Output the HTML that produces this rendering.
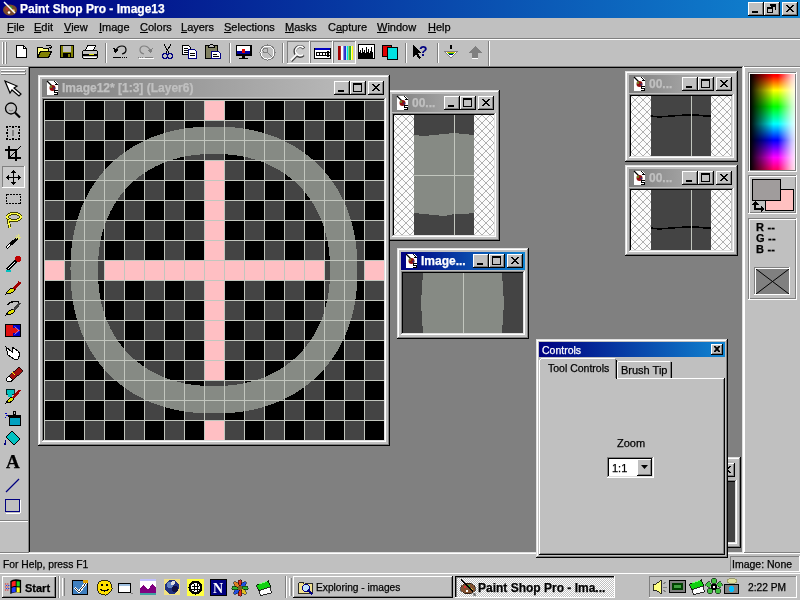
<!DOCTYPE html><html><head><meta charset="utf-8"><style>html,body{margin:0;padding:0;width:800px;height:600px;overflow:hidden;background:#c0c0c0}body>div,body>svg,div>div,div>svg{position:absolute}.t{font-family:"Liberation Sans",sans-serif;white-space:nowrap;line-height:12px;will-change:transform;-webkit-text-stroke:0.25px currentColor}u{text-decoration:underline}</style></head><body><div style="left:0px;top:0px;width:800px;height:600px;background:#c0c0c0;"></div><div style="left:0px;top:0px;width:800px;height:18px;background:linear-gradient(to right,#000080,#1084d0);"></div><svg style="left:2px;top:1px" width="16" height="16"><ellipse cx="8" cy="9" rx="7" ry="5.5" fill="#7a4a2a"/><circle cx="5" cy="8" r="1.5" fill="#c03030"/><circle cx="9" cy="6.5" r="1.3" fill="#30a030"/><circle cx="11.5" cy="9.5" r="1.3" fill="#e0c040"/><circle cx="7" cy="11.5" r="1.3" fill="#fff"/><path d="M2 1l11 11" stroke="#fff" stroke-width="1.5"/></svg><div class="t" style="left:20px;top:3px;font-size:12px;color:#fff;font-weight:bold;">Paint Shop Pro - Image13</div><div style="left:782px;top:2px;width:16px;height:14px;background:#c0c0c0;"></div><div style="left:782px;top:2px;width:16px;height:1px;background:#ffffff;"></div><div style="left:782px;top:2px;width:1px;height:14px;background:#ffffff;"></div><div style="left:782px;top:15px;width:16px;height:1px;background:#000000;"></div><div style="left:797px;top:2px;width:1px;height:14px;background:#000000;"></div><div style="left:783px;top:14px;width:14px;height:1px;background:#808080;"></div><div style="left:796px;top:3px;width:1px;height:12px;background:#808080;"></div><svg style="left:786px;top:5px" width="8" height="7"><path d="M0 0h2v1h-2zM6 0h2v1h-2zM1 1h2v1h-2zM5 1h2v1h-2zM2 2h4v1h-4zM3 3h2v1h-2zM2 4h4v1h-4zM1 5h2v1h-2zM5 5h2v1h-2zM0 6h2v1h-2zM6 6h2v1h-2z" fill="#000" shape-rendering="crispEdges"/></svg><div style="left:764px;top:2px;width:16px;height:14px;background:#c0c0c0;"></div><div style="left:764px;top:2px;width:16px;height:1px;background:#ffffff;"></div><div style="left:764px;top:2px;width:1px;height:14px;background:#ffffff;"></div><div style="left:764px;top:15px;width:16px;height:1px;background:#000000;"></div><div style="left:779px;top:2px;width:1px;height:14px;background:#000000;"></div><div style="left:765px;top:14px;width:14px;height:1px;background:#808080;"></div><div style="left:778px;top:3px;width:1px;height:12px;background:#808080;"></div><svg style="left:767px;top:4px" width="9" height="9"><path d="M3 0h6v6h-1v-4h-5z M0 3h6v6h-6z" fill="#000"/><rect x="1" y="5" width="4" height="3" fill="#c0c0c0"/><rect x="4" y="2" width="4" height="1" fill="#000"/></svg><div style="left:748px;top:2px;width:16px;height:14px;background:#c0c0c0;"></div><div style="left:748px;top:2px;width:16px;height:1px;background:#ffffff;"></div><div style="left:748px;top:2px;width:1px;height:14px;background:#ffffff;"></div><div style="left:748px;top:15px;width:16px;height:1px;background:#000000;"></div><div style="left:763px;top:2px;width:1px;height:14px;background:#000000;"></div><div style="left:749px;top:14px;width:14px;height:1px;background:#808080;"></div><div style="left:762px;top:3px;width:1px;height:12px;background:#808080;"></div><div style="left:752px;top:11px;width:6px;height:2px;background:#000"></div><div class="t" style="left:7px;top:21px;font-size:11px;color:#000;font-weight:normal;"><u>F</u>ile</div><div class="t" style="left:34px;top:21px;font-size:11px;color:#000;font-weight:normal;"><u>E</u>dit</div><div class="t" style="left:64px;top:21px;font-size:11px;color:#000;font-weight:normal;"><u>V</u>iew</div><div class="t" style="left:99px;top:21px;font-size:11px;color:#000;font-weight:normal;"><u>I</u>mage</div><div class="t" style="left:140px;top:21px;font-size:11px;color:#000;font-weight:normal;"><u>C</u>olors</div><div class="t" style="left:181px;top:21px;font-size:11px;color:#000;font-weight:normal;"><u>L</u>ayers</div><div class="t" style="left:224px;top:21px;font-size:11px;color:#000;font-weight:normal;"><u>S</u>elections</div><div class="t" style="left:285px;top:21px;font-size:11px;color:#000;font-weight:normal;"><u>M</u>asks</div><div class="t" style="left:328px;top:21px;font-size:11px;color:#000;font-weight:normal;">C<u>a</u>pture</div><div class="t" style="left:377px;top:21px;font-size:11px;color:#000;font-weight:normal;"><u>W</u>indow</div><div class="t" style="left:428px;top:21px;font-size:11px;color:#000;font-weight:normal;"><u>H</u>elp</div><div style="left:0px;top:38px;width:800px;height:1px;background:#808080;"></div><div style="left:0px;top:39px;width:800px;height:1px;background:#ffffff;"></div><div style="left:0px;top:66px;width:800px;height:1px;background:#808080;"></div><div style="left:28px;top:66px;width:716px;height:487px;background:#808080;"></div><div style="left:29px;top:67px;width:713px;height:485px;background:#000000;"></div><div style="left:30px;top:68px;width:712px;height:484px;background:#808080;"></div><div style="left:743px;top:66px;width:1px;height:488px;background:#ffffff;"></div><div style="left:742px;top:67px;width:1px;height:485px;background:#dfdfdf;"></div><div style="left:0px;top:553px;width:800px;height:1px;background:#ffffff;"></div><div style="left:29px;top:552px;width:714px;height:1px;background:#dfdfdf;"></div><div style="left:0px;top:552px;width:28px;height:1px;background:#808080;"></div><div style="left:388px;top:90px;width:112px;height:151px;background:#c0c0c0;"></div><div style="left:388px;top:90px;width:112px;height:1px;background:#dfdfdf;"></div><div style="left:388px;top:90px;width:1px;height:151px;background:#dfdfdf;"></div><div style="left:388px;top:240px;width:112px;height:1px;background:#000000;"></div><div style="left:499px;top:90px;width:1px;height:151px;background:#000000;"></div><div style="left:389px;top:91px;width:110px;height:1px;background:#ffffff;"></div><div style="left:389px;top:91px;width:1px;height:149px;background:#ffffff;"></div><div style="left:389px;top:239px;width:110px;height:1px;background:#808080;"></div><div style="left:498px;top:91px;width:1px;height:149px;background:#808080;"></div><div style="left:392px;top:94px;width:104px;height:18px;background:linear-gradient(to right,#808080,#c0c0c0);"></div><svg style="left:395px;top:95px" width="16" height="16" shape-rendering="crispEdges"><path d="M2 1h8l3 3v11h-11z" fill="#fff"/><path d="M9.5 1.5l3 3h-3" fill="none" stroke="#000"/><path d="M2 1l5 5" stroke="#000" stroke-width="1.2" shape-rendering="auto"/><circle cx="7.5" cy="8" r="3" fill="#901010" shape-rendering="auto"/><circle cx="6" cy="6.8" r="1.2" fill="#708020" shape-rendering="auto"/><circle cx="9.3" cy="8.5" r="0.9" fill="#203080" shape-rendering="auto"/><path d="M9 10h4v1h-3v1h3v3h-4v-1h3v-1h-3z" fill="#000"/></svg><div class="t" style="left:412px;top:97px;font-size:12px;color:#c0c0c0;font-weight:bold;">00...</div><div style="left:478px;top:96px;width:16px;height:14px;background:#c0c0c0;"></div><div style="left:478px;top:96px;width:16px;height:1px;background:#ffffff;"></div><div style="left:478px;top:96px;width:1px;height:14px;background:#ffffff;"></div><div style="left:478px;top:109px;width:16px;height:1px;background:#000000;"></div><div style="left:493px;top:96px;width:1px;height:14px;background:#000000;"></div><div style="left:479px;top:108px;width:14px;height:1px;background:#808080;"></div><div style="left:492px;top:97px;width:1px;height:12px;background:#808080;"></div><svg style="left:482px;top:99px" width="8" height="7"><path d="M0 0h2v1h-2zM6 0h2v1h-2zM1 1h2v1h-2zM5 1h2v1h-2zM2 2h4v1h-4zM3 3h2v1h-2zM2 4h4v1h-4zM1 5h2v1h-2zM5 5h2v1h-2zM0 6h2v1h-2zM6 6h2v1h-2z" fill="#000" shape-rendering="crispEdges"/></svg><div style="left:460px;top:96px;width:16px;height:14px;background:#c0c0c0;"></div><div style="left:460px;top:96px;width:16px;height:1px;background:#ffffff;"></div><div style="left:460px;top:96px;width:1px;height:14px;background:#ffffff;"></div><div style="left:460px;top:109px;width:16px;height:1px;background:#000000;"></div><div style="left:475px;top:96px;width:1px;height:14px;background:#000000;"></div><div style="left:461px;top:108px;width:14px;height:1px;background:#808080;"></div><div style="left:474px;top:97px;width:1px;height:12px;background:#808080;"></div><svg style="left:463px;top:98px" width="9" height="9"><path d="M0 0h9v9h-9z M1 2v6h7v-6z" fill="#000" fill-rule="evenodd"/></svg><div style="left:444px;top:96px;width:16px;height:14px;background:#c0c0c0;"></div><div style="left:444px;top:96px;width:16px;height:1px;background:#ffffff;"></div><div style="left:444px;top:96px;width:1px;height:14px;background:#ffffff;"></div><div style="left:444px;top:109px;width:16px;height:1px;background:#000000;"></div><div style="left:459px;top:96px;width:1px;height:14px;background:#000000;"></div><div style="left:445px;top:108px;width:14px;height:1px;background:#808080;"></div><div style="left:458px;top:97px;width:1px;height:12px;background:#808080;"></div><div style="left:448px;top:105px;width:6px;height:2px;background:#000"></div><div style="left:392px;top:113px;width:104px;height:1px;background:#808080;"></div><div style="left:392px;top:113px;width:1px;height:124px;background:#808080;"></div><div style="left:392px;top:236px;width:104px;height:1px;background:#ffffff;"></div><div style="left:495px;top:113px;width:1px;height:124px;background:#ffffff;"></div><div style="left:393px;top:114px;width:102px;height:1px;background:#000000;"></div><div style="left:393px;top:114px;width:1px;height:122px;background:#000000;"></div><div style="left:393px;top:235px;width:102px;height:1px;background:#dfdfdf;"></div><div style="left:494px;top:114px;width:1px;height:122px;background:#dfdfdf;"></div><div style="left:394px;top:115px;width:100px;height:120px;overflow:hidden"><div style="left:0px;top:0px;width:20px;height:120px"><svg width="100%" height="100%" style="position:static;display:block"><defs><pattern id="ck1" width="8" height="8" patternUnits="userSpaceOnUse"><rect width="8" height="8" fill="#fcfcfc"/><path d="M0 0L8 8M8 0L0 8" stroke="#b0b0b0" stroke-width="1"/></pattern></defs><rect width="100%" height="100%" fill="url(#ck1)"/></svg></div><div style="left:80px;top:0px;width:20px;height:120px"><svg width="100%" height="100%" style="position:static;display:block"><defs><pattern id="ck2" width="8" height="8" patternUnits="userSpaceOnUse"><rect width="8" height="8" fill="#fcfcfc"/><path d="M0 0L8 8M8 0L0 8" stroke="#b0b0b0" stroke-width="1"/></pattern></defs><rect width="100%" height="100%" fill="url(#ck2)"/></svg></div><svg style="left:20px;top:0" width="60" height="120" shape-rendering="crispEdges"><rect width="60" height="120" fill="#444444"/><path d="M0 20 L10 21 L20 20 L30 19 L40 18 L50 19 L60 20 L60 98 L50 99 L40 99 L30 101 L20 100 L10 99 L0 98 Z" fill="#868a84"/><rect x="40" y="0" width="1" height="120" fill="#c2c6be"/><rect x="0" y="60" width="60" height="1" fill="#c2c6be"/></svg></div><div style="left:38px;top:75px;width:352px;height:371px;background:#c0c0c0;"></div><div style="left:38px;top:75px;width:352px;height:1px;background:#dfdfdf;"></div><div style="left:38px;top:75px;width:1px;height:371px;background:#dfdfdf;"></div><div style="left:38px;top:445px;width:352px;height:1px;background:#000000;"></div><div style="left:389px;top:75px;width:1px;height:371px;background:#000000;"></div><div style="left:39px;top:76px;width:350px;height:1px;background:#ffffff;"></div><div style="left:39px;top:76px;width:1px;height:369px;background:#ffffff;"></div><div style="left:39px;top:444px;width:350px;height:1px;background:#808080;"></div><div style="left:388px;top:76px;width:1px;height:369px;background:#808080;"></div><div style="left:42px;top:79px;width:344px;height:18px;background:linear-gradient(to right,#808080,#c0c0c0);"></div><svg style="left:45px;top:80px" width="16" height="16" shape-rendering="crispEdges"><path d="M2 1h8l3 3v11h-11z" fill="#fff"/><path d="M9.5 1.5l3 3h-3" fill="none" stroke="#000"/><path d="M2 1l5 5" stroke="#000" stroke-width="1.2" shape-rendering="auto"/><circle cx="7.5" cy="8" r="3" fill="#901010" shape-rendering="auto"/><circle cx="6" cy="6.8" r="1.2" fill="#708020" shape-rendering="auto"/><circle cx="9.3" cy="8.5" r="0.9" fill="#203080" shape-rendering="auto"/><path d="M9 10h4v1h-3v1h3v3h-4v-1h3v-1h-3z" fill="#000"/></svg><div class="t" style="left:62px;top:82px;font-size:12px;color:#c0c0c0;font-weight:bold;">Image12* [1:3] (Layer6)</div><div style="left:368px;top:81px;width:16px;height:14px;background:#c0c0c0;"></div><div style="left:368px;top:81px;width:16px;height:1px;background:#ffffff;"></div><div style="left:368px;top:81px;width:1px;height:14px;background:#ffffff;"></div><div style="left:368px;top:94px;width:16px;height:1px;background:#000000;"></div><div style="left:383px;top:81px;width:1px;height:14px;background:#000000;"></div><div style="left:369px;top:93px;width:14px;height:1px;background:#808080;"></div><div style="left:382px;top:82px;width:1px;height:12px;background:#808080;"></div><svg style="left:372px;top:84px" width="8" height="7"><path d="M0 0h2v1h-2zM6 0h2v1h-2zM1 1h2v1h-2zM5 1h2v1h-2zM2 2h4v1h-4zM3 3h2v1h-2zM2 4h4v1h-4zM1 5h2v1h-2zM5 5h2v1h-2zM0 6h2v1h-2zM6 6h2v1h-2z" fill="#000" shape-rendering="crispEdges"/></svg><div style="left:350px;top:81px;width:16px;height:14px;background:#c0c0c0;"></div><div style="left:350px;top:81px;width:16px;height:1px;background:#ffffff;"></div><div style="left:350px;top:81px;width:1px;height:14px;background:#ffffff;"></div><div style="left:350px;top:94px;width:16px;height:1px;background:#000000;"></div><div style="left:365px;top:81px;width:1px;height:14px;background:#000000;"></div><div style="left:351px;top:93px;width:14px;height:1px;background:#808080;"></div><div style="left:364px;top:82px;width:1px;height:12px;background:#808080;"></div><svg style="left:353px;top:83px" width="9" height="9"><path d="M0 0h9v9h-9z M1 2v6h7v-6z" fill="#000" fill-rule="evenodd"/></svg><div style="left:334px;top:81px;width:16px;height:14px;background:#c0c0c0;"></div><div style="left:334px;top:81px;width:16px;height:1px;background:#ffffff;"></div><div style="left:334px;top:81px;width:1px;height:14px;background:#ffffff;"></div><div style="left:334px;top:94px;width:16px;height:1px;background:#000000;"></div><div style="left:349px;top:81px;width:1px;height:14px;background:#000000;"></div><div style="left:335px;top:93px;width:14px;height:1px;background:#808080;"></div><div style="left:348px;top:82px;width:1px;height:12px;background:#808080;"></div><div style="left:338px;top:90px;width:6px;height:2px;background:#000"></div><div style="left:42px;top:98px;width:344px;height:1px;background:#808080;"></div><div style="left:42px;top:98px;width:1px;height:344px;background:#808080;"></div><div style="left:42px;top:441px;width:344px;height:1px;background:#ffffff;"></div><div style="left:385px;top:98px;width:1px;height:344px;background:#ffffff;"></div><div style="left:43px;top:99px;width:342px;height:1px;background:#000000;"></div><div style="left:43px;top:99px;width:1px;height:342px;background:#000000;"></div><div style="left:43px;top:440px;width:342px;height:1px;background:#dfdfdf;"></div><div style="left:384px;top:99px;width:1px;height:342px;background:#dfdfdf;"></div><div style="left:44px;top:100px;width:340px;height:340px;overflow:hidden"><svg width="340" height="340" style="position:static;display:block" shape-rendering="crispEdges"><rect width="340" height="340" fill="#000"/><rect x="20" y="0" width="20" height="20" fill="#444444"/><rect x="60" y="0" width="20" height="20" fill="#444444"/><rect x="100" y="0" width="20" height="20" fill="#444444"/><rect x="140" y="0" width="20" height="20" fill="#444444"/><rect x="160" y="0" width="20" height="20" fill="#ffbfc3"/><rect x="200" y="0" width="20" height="20" fill="#444444"/><rect x="240" y="0" width="20" height="20" fill="#444444"/><rect x="280" y="0" width="20" height="20" fill="#444444"/><rect x="320" y="0" width="20" height="20" fill="#444444"/><rect x="0" y="20" width="20" height="20" fill="#444444"/><rect x="40" y="20" width="20" height="20" fill="#444444"/><rect x="80" y="20" width="20" height="20" fill="#444444"/><rect x="120" y="20" width="20" height="20" fill="#444444"/><rect x="160" y="20" width="20" height="20" fill="#444444"/><rect x="180" y="20" width="20" height="20" fill="#444444"/><rect x="220" y="20" width="20" height="20" fill="#444444"/><rect x="260" y="20" width="20" height="20" fill="#444444"/><rect x="300" y="20" width="20" height="20" fill="#444444"/><rect x="20" y="40" width="20" height="20" fill="#444444"/><rect x="60" y="40" width="20" height="20" fill="#444444"/><rect x="100" y="40" width="20" height="20" fill="#444444"/><rect x="140" y="40" width="20" height="20" fill="#444444"/><rect x="160" y="40" width="20" height="20" fill="#444444"/><rect x="200" y="40" width="20" height="20" fill="#444444"/><rect x="240" y="40" width="20" height="20" fill="#444444"/><rect x="280" y="40" width="20" height="20" fill="#444444"/><rect x="320" y="40" width="20" height="20" fill="#444444"/><rect x="0" y="60" width="20" height="20" fill="#444444"/><rect x="40" y="60" width="20" height="20" fill="#444444"/><rect x="80" y="60" width="20" height="20" fill="#444444"/><rect x="120" y="60" width="20" height="20" fill="#444444"/><rect x="160" y="60" width="20" height="20" fill="#ffbfc3"/><rect x="180" y="60" width="20" height="20" fill="#444444"/><rect x="220" y="60" width="20" height="20" fill="#444444"/><rect x="260" y="60" width="20" height="20" fill="#444444"/><rect x="300" y="60" width="20" height="20" fill="#444444"/><rect x="20" y="80" width="20" height="20" fill="#444444"/><rect x="60" y="80" width="20" height="20" fill="#444444"/><rect x="100" y="80" width="20" height="20" fill="#444444"/><rect x="140" y="80" width="20" height="20" fill="#444444"/><rect x="160" y="80" width="20" height="20" fill="#ffbfc3"/><rect x="200" y="80" width="20" height="20" fill="#444444"/><rect x="240" y="80" width="20" height="20" fill="#444444"/><rect x="280" y="80" width="20" height="20" fill="#444444"/><rect x="320" y="80" width="20" height="20" fill="#444444"/><rect x="0" y="100" width="20" height="20" fill="#444444"/><rect x="40" y="100" width="20" height="20" fill="#444444"/><rect x="80" y="100" width="20" height="20" fill="#444444"/><rect x="120" y="100" width="20" height="20" fill="#444444"/><rect x="160" y="100" width="20" height="20" fill="#ffbfc3"/><rect x="180" y="100" width="20" height="20" fill="#444444"/><rect x="220" y="100" width="20" height="20" fill="#444444"/><rect x="260" y="100" width="20" height="20" fill="#444444"/><rect x="300" y="100" width="20" height="20" fill="#444444"/><rect x="20" y="120" width="20" height="20" fill="#444444"/><rect x="60" y="120" width="20" height="20" fill="#444444"/><rect x="100" y="120" width="20" height="20" fill="#444444"/><rect x="140" y="120" width="20" height="20" fill="#444444"/><rect x="160" y="120" width="20" height="20" fill="#ffbfc3"/><rect x="200" y="120" width="20" height="20" fill="#444444"/><rect x="240" y="120" width="20" height="20" fill="#444444"/><rect x="280" y="120" width="20" height="20" fill="#444444"/><rect x="320" y="120" width="20" height="20" fill="#444444"/><rect x="0" y="140" width="20" height="20" fill="#444444"/><rect x="40" y="140" width="20" height="20" fill="#444444"/><rect x="80" y="140" width="20" height="20" fill="#444444"/><rect x="120" y="140" width="20" height="20" fill="#444444"/><rect x="160" y="140" width="20" height="20" fill="#ffbfc3"/><rect x="180" y="140" width="20" height="20" fill="#444444"/><rect x="220" y="140" width="20" height="20" fill="#444444"/><rect x="260" y="140" width="20" height="20" fill="#444444"/><rect x="300" y="140" width="20" height="20" fill="#444444"/><rect x="0" y="160" width="20" height="20" fill="#ffbfc3"/><rect x="20" y="160" width="20" height="20" fill="#444444"/><rect x="40" y="160" width="20" height="20" fill="#444444"/><rect x="60" y="160" width="20" height="20" fill="#ffbfc3"/><rect x="80" y="160" width="20" height="20" fill="#ffbfc3"/><rect x="100" y="160" width="20" height="20" fill="#ffbfc3"/><rect x="120" y="160" width="20" height="20" fill="#ffbfc3"/><rect x="140" y="160" width="20" height="20" fill="#ffbfc3"/><rect x="160" y="160" width="20" height="20" fill="#ffbfc3"/><rect x="180" y="160" width="20" height="20" fill="#ffbfc3"/><rect x="200" y="160" width="20" height="20" fill="#ffbfc3"/><rect x="220" y="160" width="20" height="20" fill="#ffbfc3"/><rect x="240" y="160" width="20" height="20" fill="#ffbfc3"/><rect x="260" y="160" width="20" height="20" fill="#ffbfc3"/><rect x="280" y="160" width="20" height="20" fill="#444444"/><rect x="300" y="160" width="20" height="20" fill="#444444"/><rect x="320" y="160" width="20" height="20" fill="#ffbfc3"/><rect x="20" y="180" width="20" height="20" fill="#444444"/><rect x="60" y="180" width="20" height="20" fill="#444444"/><rect x="100" y="180" width="20" height="20" fill="#444444"/><rect x="140" y="180" width="20" height="20" fill="#444444"/><rect x="160" y="180" width="20" height="20" fill="#ffbfc3"/><rect x="200" y="180" width="20" height="20" fill="#444444"/><rect x="240" y="180" width="20" height="20" fill="#444444"/><rect x="280" y="180" width="20" height="20" fill="#444444"/><rect x="320" y="180" width="20" height="20" fill="#444444"/><rect x="0" y="200" width="20" height="20" fill="#444444"/><rect x="40" y="200" width="20" height="20" fill="#444444"/><rect x="80" y="200" width="20" height="20" fill="#444444"/><rect x="120" y="200" width="20" height="20" fill="#444444"/><rect x="160" y="200" width="20" height="20" fill="#ffbfc3"/><rect x="180" y="200" width="20" height="20" fill="#444444"/><rect x="220" y="200" width="20" height="20" fill="#444444"/><rect x="260" y="200" width="20" height="20" fill="#444444"/><rect x="300" y="200" width="20" height="20" fill="#444444"/><rect x="20" y="220" width="20" height="20" fill="#444444"/><rect x="60" y="220" width="20" height="20" fill="#444444"/><rect x="100" y="220" width="20" height="20" fill="#444444"/><rect x="140" y="220" width="20" height="20" fill="#444444"/><rect x="160" y="220" width="20" height="20" fill="#ffbfc3"/><rect x="200" y="220" width="20" height="20" fill="#444444"/><rect x="240" y="220" width="20" height="20" fill="#444444"/><rect x="280" y="220" width="20" height="20" fill="#444444"/><rect x="320" y="220" width="20" height="20" fill="#444444"/><rect x="0" y="240" width="20" height="20" fill="#444444"/><rect x="40" y="240" width="20" height="20" fill="#444444"/><rect x="80" y="240" width="20" height="20" fill="#444444"/><rect x="120" y="240" width="20" height="20" fill="#444444"/><rect x="160" y="240" width="20" height="20" fill="#ffbfc3"/><rect x="180" y="240" width="20" height="20" fill="#444444"/><rect x="220" y="240" width="20" height="20" fill="#444444"/><rect x="260" y="240" width="20" height="20" fill="#444444"/><rect x="300" y="240" width="20" height="20" fill="#444444"/><rect x="20" y="260" width="20" height="20" fill="#444444"/><rect x="60" y="260" width="20" height="20" fill="#444444"/><rect x="100" y="260" width="20" height="20" fill="#444444"/><rect x="140" y="260" width="20" height="20" fill="#444444"/><rect x="160" y="260" width="20" height="20" fill="#ffbfc3"/><rect x="200" y="260" width="20" height="20" fill="#444444"/><rect x="240" y="260" width="20" height="20" fill="#444444"/><rect x="280" y="260" width="20" height="20" fill="#444444"/><rect x="320" y="260" width="20" height="20" fill="#444444"/><rect x="0" y="280" width="20" height="20" fill="#444444"/><rect x="40" y="280" width="20" height="20" fill="#444444"/><rect x="80" y="280" width="20" height="20" fill="#444444"/><rect x="120" y="280" width="20" height="20" fill="#444444"/><rect x="160" y="280" width="20" height="20" fill="#444444"/><rect x="180" y="280" width="20" height="20" fill="#444444"/><rect x="220" y="280" width="20" height="20" fill="#444444"/><rect x="260" y="280" width="20" height="20" fill="#444444"/><rect x="300" y="280" width="20" height="20" fill="#444444"/><rect x="20" y="300" width="20" height="20" fill="#444444"/><rect x="60" y="300" width="20" height="20" fill="#444444"/><rect x="100" y="300" width="20" height="20" fill="#444444"/><rect x="140" y="300" width="20" height="20" fill="#444444"/><rect x="160" y="300" width="20" height="20" fill="#444444"/><rect x="200" y="300" width="20" height="20" fill="#444444"/><rect x="240" y="300" width="20" height="20" fill="#444444"/><rect x="280" y="300" width="20" height="20" fill="#444444"/><rect x="320" y="300" width="20" height="20" fill="#444444"/><rect x="0" y="320" width="20" height="20" fill="#444444"/><rect x="40" y="320" width="20" height="20" fill="#444444"/><rect x="80" y="320" width="20" height="20" fill="#444444"/><rect x="120" y="320" width="20" height="20" fill="#444444"/><rect x="160" y="320" width="20" height="20" fill="#ffbfc3"/><rect x="180" y="320" width="20" height="20" fill="#444444"/><rect x="220" y="320" width="20" height="20" fill="#444444"/><rect x="260" y="320" width="20" height="20" fill="#444444"/><rect x="300" y="320" width="20" height="20" fill="#444444"/><path d="M313.50 170.00 L313.48 173.76 L313.40 177.52 L313.26 181.27 L313.04 185.03 L312.75 188.79 L312.38 192.55 L311.93 196.30 L311.39 200.05 L310.76 203.79 L310.04 207.52 L309.23 211.24 L308.32 214.94 L307.31 218.62 L306.20 222.28 L305.00 225.92 L303.69 229.52 L302.28 233.09 L300.76 236.63 L299.15 240.12 L297.43 243.57 L295.60 246.97 L293.68 250.32 L291.65 253.61 L289.52 256.84 L287.29 260.00 L284.97 263.10 L282.54 266.12 L280.02 269.07 L277.42 271.93 L274.72 274.72 L271.93 277.42 L269.07 280.02 L266.12 282.54 L263.10 284.97 L260.00 287.29 L256.84 289.52 L253.61 291.65 L250.32 293.68 L246.97 295.60 L243.57 297.43 L240.12 299.15 L236.63 300.76 L233.09 302.28 L229.52 303.69 L225.92 305.00 L222.28 306.20 L218.62 307.31 L214.94 308.32 L211.24 309.23 L207.52 310.04 L203.79 310.76 L200.05 311.39 L196.30 311.93 L192.55 312.38 L188.79 312.75 L185.03 313.04 L181.27 313.26 L177.52 313.40 L173.76 313.48 L170.00 313.50 L166.24 313.48 L162.48 313.40 L158.73 313.26 L154.97 313.04 L151.21 312.75 L147.45 312.38 L143.70 311.93 L139.95 311.39 L136.21 310.76 L132.48 310.04 L128.76 309.23 L125.06 308.32 L121.38 307.31 L117.72 306.20 L114.08 305.00 L110.48 303.69 L106.91 302.28 L103.37 300.76 L99.88 299.15 L96.43 297.43 L93.03 295.60 L89.68 293.68 L86.39 291.65 L83.16 289.52 L80.00 287.29 L76.90 284.97 L73.88 282.54 L70.93 280.02 L68.07 277.42 L65.28 274.72 L62.58 271.93 L59.98 269.07 L57.46 266.12 L55.03 263.10 L52.71 260.00 L50.48 256.84 L48.35 253.61 L46.32 250.32 L44.40 246.97 L42.57 243.57 L40.85 240.12 L39.24 236.63 L37.72 233.09 L36.31 229.52 L35.00 225.92 L33.80 222.28 L32.69 218.62 L31.68 214.94 L30.77 211.24 L29.96 207.52 L29.24 203.79 L28.61 200.05 L28.07 196.30 L27.62 192.55 L27.25 188.79 L26.96 185.03 L26.74 181.27 L26.60 177.52 L26.52 173.76 L26.50 170.00 L26.52 166.24 L26.60 162.48 L26.74 158.73 L26.96 154.97 L27.25 151.21 L27.62 147.45 L28.07 143.70 L28.61 139.95 L29.24 136.21 L29.96 132.48 L30.77 128.76 L31.68 125.06 L32.69 121.38 L33.80 117.72 L35.00 114.08 L36.31 110.48 L37.72 106.91 L39.24 103.37 L40.85 99.88 L42.57 96.43 L44.40 93.03 L46.32 89.68 L48.35 86.39 L50.48 83.16 L52.71 80.00 L55.03 76.90 L57.46 73.88 L59.98 70.93 L62.58 68.07 L65.28 65.28 L68.07 62.58 L70.93 59.98 L73.88 57.46 L76.90 55.03 L80.00 52.71 L83.16 50.48 L86.39 48.35 L89.68 46.32 L93.03 44.40 L96.43 42.57 L99.88 40.85 L103.37 39.24 L106.91 37.72 L110.48 36.31 L114.08 35.00 L117.72 33.80 L121.38 32.69 L125.06 31.68 L128.76 30.77 L132.48 29.96 L136.21 29.24 L139.95 28.61 L143.70 28.07 L147.45 27.62 L151.21 27.25 L154.97 26.96 L158.73 26.74 L162.48 26.60 L166.24 26.52 L170.00 26.50 L173.76 26.52 L177.52 26.60 L181.27 26.74 L185.03 26.96 L188.79 27.25 L192.55 27.62 L196.30 28.07 L200.05 28.61 L203.79 29.24 L207.52 29.96 L211.24 30.77 L214.94 31.68 L218.62 32.69 L222.28 33.80 L225.92 35.00 L229.52 36.31 L233.09 37.72 L236.63 39.24 L240.12 40.85 L243.57 42.57 L246.97 44.40 L250.32 46.32 L253.61 48.35 L256.84 50.48 L260.00 52.71 L263.10 55.03 L266.12 57.46 L269.07 59.98 L271.93 62.58 L274.72 65.28 L277.42 68.07 L280.02 70.93 L282.54 73.88 L284.97 76.90 L287.29 80.00 L289.52 83.16 L291.65 86.39 L293.68 89.68 L295.60 93.03 L297.43 96.43 L299.15 99.88 L300.76 103.37 L302.28 106.91 L303.69 110.48 L305.00 114.08 L306.20 117.72 L307.31 121.38 L308.32 125.06 L309.23 128.76 L310.04 132.48 L310.76 136.21 L311.39 139.95 L311.93 143.70 L312.38 147.45 L312.75 151.21 L313.04 154.97 L313.26 158.73 L313.40 162.48 L313.48 166.24Z M286.00 170.00 L285.98 173.04 L285.92 176.08 L285.80 179.11 L285.63 182.15 L285.40 185.19 L285.10 188.23 L284.73 191.26 L284.29 194.29 L283.78 197.32 L283.20 200.33 L282.54 203.34 L281.81 206.33 L281.00 209.31 L280.10 212.26 L279.13 215.20 L278.07 218.12 L276.93 221.00 L275.71 223.86 L274.40 226.68 L273.01 229.47 L271.53 232.22 L269.98 234.93 L268.34 237.59 L266.62 240.20 L264.81 242.75 L262.93 245.26 L260.97 247.70 L258.94 250.08 L256.83 252.40 L254.65 254.65 L252.40 256.83 L250.08 258.94 L247.70 260.97 L245.26 262.93 L242.75 264.81 L240.20 266.62 L237.59 268.34 L234.93 269.98 L232.22 271.53 L229.47 273.01 L226.68 274.40 L223.86 275.71 L221.00 276.93 L218.12 278.07 L215.20 279.13 L212.26 280.10 L209.31 281.00 L206.33 281.81 L203.34 282.54 L200.33 283.20 L197.32 283.78 L194.29 284.29 L191.26 284.73 L188.23 285.10 L185.19 285.40 L182.15 285.63 L179.11 285.80 L176.08 285.92 L173.04 285.98 L170.00 286.00 L166.96 285.98 L163.92 285.92 L160.89 285.80 L157.85 285.63 L154.81 285.40 L151.77 285.10 L148.74 284.73 L145.71 284.29 L142.68 283.78 L139.67 283.20 L136.66 282.54 L133.67 281.81 L130.69 281.00 L127.74 280.10 L124.80 279.13 L121.88 278.07 L119.00 276.93 L116.14 275.71 L113.32 274.40 L110.53 273.01 L107.78 271.53 L105.07 269.98 L102.41 268.34 L99.80 266.62 L97.25 264.81 L94.74 262.93 L92.30 260.97 L89.92 258.94 L87.60 256.83 L85.35 254.65 L83.17 252.40 L81.06 250.08 L79.03 247.70 L77.07 245.26 L75.19 242.75 L73.38 240.20 L71.66 237.59 L70.02 234.93 L68.47 232.22 L66.99 229.47 L65.60 226.68 L64.29 223.86 L63.07 221.00 L61.93 218.12 L60.87 215.20 L59.90 212.26 L59.00 209.31 L58.19 206.33 L57.46 203.34 L56.80 200.33 L56.22 197.32 L55.71 194.29 L55.27 191.26 L54.90 188.23 L54.60 185.19 L54.37 182.15 L54.20 179.11 L54.08 176.08 L54.02 173.04 L54.00 170.00 L54.02 166.96 L54.08 163.92 L54.20 160.89 L54.37 157.85 L54.60 154.81 L54.90 151.77 L55.27 148.74 L55.71 145.71 L56.22 142.68 L56.80 139.67 L57.46 136.66 L58.19 133.67 L59.00 130.69 L59.90 127.74 L60.87 124.80 L61.93 121.88 L63.07 119.00 L64.29 116.14 L65.60 113.32 L66.99 110.53 L68.47 107.78 L70.02 105.07 L71.66 102.41 L73.38 99.80 L75.19 97.25 L77.07 94.74 L79.03 92.30 L81.06 89.92 L83.17 87.60 L85.35 85.35 L87.60 83.17 L89.92 81.06 L92.30 79.03 L94.74 77.07 L97.25 75.19 L99.80 73.38 L102.41 71.66 L105.07 70.02 L107.78 68.47 L110.53 66.99 L113.32 65.60 L116.14 64.29 L119.00 63.07 L121.88 61.93 L124.80 60.87 L127.74 59.90 L130.69 59.00 L133.67 58.19 L136.66 57.46 L139.67 56.80 L142.68 56.22 L145.71 55.71 L148.74 55.27 L151.77 54.90 L154.81 54.60 L157.85 54.37 L160.89 54.20 L163.92 54.08 L166.96 54.02 L170.00 54.00 L173.04 54.02 L176.08 54.08 L179.11 54.20 L182.15 54.37 L185.19 54.60 L188.23 54.90 L191.26 55.27 L194.29 55.71 L197.32 56.22 L200.33 56.80 L203.34 57.46 L206.33 58.19 L209.31 59.00 L212.26 59.90 L215.20 60.87 L218.12 61.93 L221.00 63.07 L223.86 64.29 L226.68 65.60 L229.47 66.99 L232.22 68.47 L234.93 70.02 L237.59 71.66 L240.20 73.38 L242.75 75.19 L245.26 77.07 L247.70 79.03 L250.08 81.06 L252.40 83.17 L254.65 85.35 L256.83 87.60 L258.94 89.92 L260.97 92.30 L262.93 94.74 L264.81 97.25 L266.62 99.80 L268.34 102.41 L269.98 105.07 L271.53 107.78 L273.01 110.53 L274.40 113.32 L275.71 116.14 L276.93 119.00 L278.07 121.88 L279.13 124.80 L280.10 127.74 L281.00 130.69 L281.81 133.67 L282.54 136.66 L283.20 139.67 L283.78 142.68 L284.29 145.71 L284.73 148.74 L285.10 151.77 L285.40 154.81 L285.63 157.85 L285.80 160.89 L285.92 163.92 L285.98 166.96Z" fill="#868a84" fill-rule="evenodd"/><rect x="0" y="0" width="1" height="340" fill="#c2c6be"/><rect x="0" y="0" width="340" height="1" fill="#c2c6be"/><rect x="20" y="0" width="1" height="340" fill="#c2c6be"/><rect x="0" y="20" width="340" height="1" fill="#c2c6be"/><rect x="40" y="0" width="1" height="340" fill="#c2c6be"/><rect x="0" y="40" width="340" height="1" fill="#c2c6be"/><rect x="60" y="0" width="1" height="340" fill="#c2c6be"/><rect x="0" y="60" width="340" height="1" fill="#c2c6be"/><rect x="80" y="0" width="1" height="340" fill="#c2c6be"/><rect x="0" y="80" width="340" height="1" fill="#c2c6be"/><rect x="100" y="0" width="1" height="340" fill="#c2c6be"/><rect x="0" y="100" width="340" height="1" fill="#c2c6be"/><rect x="120" y="0" width="1" height="340" fill="#c2c6be"/><rect x="0" y="120" width="340" height="1" fill="#c2c6be"/><rect x="140" y="0" width="1" height="340" fill="#c2c6be"/><rect x="0" y="140" width="340" height="1" fill="#c2c6be"/><rect x="160" y="0" width="1" height="340" fill="#c2c6be"/><rect x="0" y="160" width="340" height="1" fill="#c2c6be"/><rect x="180" y="0" width="1" height="340" fill="#c2c6be"/><rect x="0" y="180" width="340" height="1" fill="#c2c6be"/><rect x="200" y="0" width="1" height="340" fill="#c2c6be"/><rect x="0" y="200" width="340" height="1" fill="#c2c6be"/><rect x="220" y="0" width="1" height="340" fill="#c2c6be"/><rect x="0" y="220" width="340" height="1" fill="#c2c6be"/><rect x="240" y="0" width="1" height="340" fill="#c2c6be"/><rect x="0" y="240" width="340" height="1" fill="#c2c6be"/><rect x="260" y="0" width="1" height="340" fill="#c2c6be"/><rect x="0" y="260" width="340" height="1" fill="#c2c6be"/><rect x="280" y="0" width="1" height="340" fill="#c2c6be"/><rect x="0" y="280" width="340" height="1" fill="#c2c6be"/><rect x="300" y="0" width="1" height="340" fill="#c2c6be"/><rect x="0" y="300" width="340" height="1" fill="#c2c6be"/><rect x="320" y="0" width="1" height="340" fill="#c2c6be"/><rect x="0" y="320" width="340" height="1" fill="#c2c6be"/></svg></div><div style="left:625px;top:71px;width:113px;height:91px;background:#c0c0c0;"></div><div style="left:625px;top:71px;width:113px;height:1px;background:#dfdfdf;"></div><div style="left:625px;top:71px;width:1px;height:91px;background:#dfdfdf;"></div><div style="left:625px;top:161px;width:113px;height:1px;background:#000000;"></div><div style="left:737px;top:71px;width:1px;height:91px;background:#000000;"></div><div style="left:626px;top:72px;width:111px;height:1px;background:#ffffff;"></div><div style="left:626px;top:72px;width:1px;height:89px;background:#ffffff;"></div><div style="left:626px;top:160px;width:111px;height:1px;background:#808080;"></div><div style="left:736px;top:72px;width:1px;height:89px;background:#808080;"></div><div style="left:629px;top:75px;width:105px;height:18px;background:linear-gradient(to right,#808080,#c0c0c0);"></div><svg style="left:632px;top:76px" width="16" height="16" shape-rendering="crispEdges"><path d="M2 1h8l3 3v11h-11z" fill="#fff"/><path d="M9.5 1.5l3 3h-3" fill="none" stroke="#000"/><path d="M2 1l5 5" stroke="#000" stroke-width="1.2" shape-rendering="auto"/><circle cx="7.5" cy="8" r="3" fill="#901010" shape-rendering="auto"/><circle cx="6" cy="6.8" r="1.2" fill="#708020" shape-rendering="auto"/><circle cx="9.3" cy="8.5" r="0.9" fill="#203080" shape-rendering="auto"/><path d="M9 10h4v1h-3v1h3v3h-4v-1h3v-1h-3z" fill="#000"/></svg><div class="t" style="left:649px;top:78px;font-size:12px;color:#c0c0c0;font-weight:bold;">00...</div><div style="left:716px;top:77px;width:16px;height:14px;background:#c0c0c0;"></div><div style="left:716px;top:77px;width:16px;height:1px;background:#ffffff;"></div><div style="left:716px;top:77px;width:1px;height:14px;background:#ffffff;"></div><div style="left:716px;top:90px;width:16px;height:1px;background:#000000;"></div><div style="left:731px;top:77px;width:1px;height:14px;background:#000000;"></div><div style="left:717px;top:89px;width:14px;height:1px;background:#808080;"></div><div style="left:730px;top:78px;width:1px;height:12px;background:#808080;"></div><svg style="left:720px;top:80px" width="8" height="7"><path d="M0 0h2v1h-2zM6 0h2v1h-2zM1 1h2v1h-2zM5 1h2v1h-2zM2 2h4v1h-4zM3 3h2v1h-2zM2 4h4v1h-4zM1 5h2v1h-2zM5 5h2v1h-2zM0 6h2v1h-2zM6 6h2v1h-2z" fill="#000" shape-rendering="crispEdges"/></svg><div style="left:698px;top:77px;width:16px;height:14px;background:#c0c0c0;"></div><div style="left:698px;top:77px;width:16px;height:1px;background:#ffffff;"></div><div style="left:698px;top:77px;width:1px;height:14px;background:#ffffff;"></div><div style="left:698px;top:90px;width:16px;height:1px;background:#000000;"></div><div style="left:713px;top:77px;width:1px;height:14px;background:#000000;"></div><div style="left:699px;top:89px;width:14px;height:1px;background:#808080;"></div><div style="left:712px;top:78px;width:1px;height:12px;background:#808080;"></div><svg style="left:701px;top:79px" width="9" height="9"><path d="M0 0h9v9h-9z M1 2v6h7v-6z" fill="#000" fill-rule="evenodd"/></svg><div style="left:682px;top:77px;width:16px;height:14px;background:#c0c0c0;"></div><div style="left:682px;top:77px;width:16px;height:1px;background:#ffffff;"></div><div style="left:682px;top:77px;width:1px;height:14px;background:#ffffff;"></div><div style="left:682px;top:90px;width:16px;height:1px;background:#000000;"></div><div style="left:697px;top:77px;width:1px;height:14px;background:#000000;"></div><div style="left:683px;top:89px;width:14px;height:1px;background:#808080;"></div><div style="left:696px;top:78px;width:1px;height:12px;background:#808080;"></div><div style="left:686px;top:86px;width:6px;height:2px;background:#000"></div><div style="left:629px;top:94px;width:105px;height:1px;background:#808080;"></div><div style="left:629px;top:94px;width:1px;height:64px;background:#808080;"></div><div style="left:629px;top:157px;width:105px;height:1px;background:#ffffff;"></div><div style="left:733px;top:94px;width:1px;height:64px;background:#ffffff;"></div><div style="left:630px;top:95px;width:103px;height:1px;background:#000000;"></div><div style="left:630px;top:95px;width:1px;height:62px;background:#000000;"></div><div style="left:630px;top:156px;width:103px;height:1px;background:#dfdfdf;"></div><div style="left:732px;top:95px;width:1px;height:62px;background:#dfdfdf;"></div><div style="left:631px;top:96px;width:101px;height:60px;overflow:hidden"><div style="left:0px;top:0px;width:20px;height:60px"><svg width="100%" height="100%" style="position:static;display:block"><defs><pattern id="ck3" width="8" height="8" patternUnits="userSpaceOnUse"><rect width="8" height="8" fill="#fcfcfc"/><path d="M0 0L8 8M8 0L0 8" stroke="#b0b0b0" stroke-width="1"/></pattern></defs><rect width="100%" height="100%" fill="url(#ck3)"/></svg></div><div style="left:80px;top:0px;width:20px;height:60px"><svg width="100%" height="100%" style="position:static;display:block"><defs><pattern id="ck4" width="8" height="8" patternUnits="userSpaceOnUse"><rect width="8" height="8" fill="#fcfcfc"/><path d="M0 0L8 8M8 0L0 8" stroke="#b0b0b0" stroke-width="1"/></pattern></defs><rect width="100%" height="100%" fill="url(#ck4)"/></svg></div><svg style="left:20px;top:0" width="60" height="60" shape-rendering="crispEdges"><rect width="60" height="60" fill="#444444"/><path d="M0 20 L8 21 L20 20 L35 19 L45 19 L55 20 L60 20" fill="none" stroke="#000" stroke-width="1.5"/><rect x="40" y="0" width="1" height="60" fill="#c2c6be"/></svg></div><div style="left:625px;top:165px;width:113px;height:91px;background:#c0c0c0;"></div><div style="left:625px;top:165px;width:113px;height:1px;background:#dfdfdf;"></div><div style="left:625px;top:165px;width:1px;height:91px;background:#dfdfdf;"></div><div style="left:625px;top:255px;width:113px;height:1px;background:#000000;"></div><div style="left:737px;top:165px;width:1px;height:91px;background:#000000;"></div><div style="left:626px;top:166px;width:111px;height:1px;background:#ffffff;"></div><div style="left:626px;top:166px;width:1px;height:89px;background:#ffffff;"></div><div style="left:626px;top:254px;width:111px;height:1px;background:#808080;"></div><div style="left:736px;top:166px;width:1px;height:89px;background:#808080;"></div><div style="left:629px;top:169px;width:105px;height:18px;background:linear-gradient(to right,#808080,#c0c0c0);"></div><svg style="left:632px;top:170px" width="16" height="16" shape-rendering="crispEdges"><path d="M2 1h8l3 3v11h-11z" fill="#fff"/><path d="M9.5 1.5l3 3h-3" fill="none" stroke="#000"/><path d="M2 1l5 5" stroke="#000" stroke-width="1.2" shape-rendering="auto"/><circle cx="7.5" cy="8" r="3" fill="#901010" shape-rendering="auto"/><circle cx="6" cy="6.8" r="1.2" fill="#708020" shape-rendering="auto"/><circle cx="9.3" cy="8.5" r="0.9" fill="#203080" shape-rendering="auto"/><path d="M9 10h4v1h-3v1h3v3h-4v-1h3v-1h-3z" fill="#000"/></svg><div class="t" style="left:649px;top:172px;font-size:12px;color:#c0c0c0;font-weight:bold;">00...</div><div style="left:716px;top:171px;width:16px;height:14px;background:#c0c0c0;"></div><div style="left:716px;top:171px;width:16px;height:1px;background:#ffffff;"></div><div style="left:716px;top:171px;width:1px;height:14px;background:#ffffff;"></div><div style="left:716px;top:184px;width:16px;height:1px;background:#000000;"></div><div style="left:731px;top:171px;width:1px;height:14px;background:#000000;"></div><div style="left:717px;top:183px;width:14px;height:1px;background:#808080;"></div><div style="left:730px;top:172px;width:1px;height:12px;background:#808080;"></div><svg style="left:720px;top:174px" width="8" height="7"><path d="M0 0h2v1h-2zM6 0h2v1h-2zM1 1h2v1h-2zM5 1h2v1h-2zM2 2h4v1h-4zM3 3h2v1h-2zM2 4h4v1h-4zM1 5h2v1h-2zM5 5h2v1h-2zM0 6h2v1h-2zM6 6h2v1h-2z" fill="#000" shape-rendering="crispEdges"/></svg><div style="left:698px;top:171px;width:16px;height:14px;background:#c0c0c0;"></div><div style="left:698px;top:171px;width:16px;height:1px;background:#ffffff;"></div><div style="left:698px;top:171px;width:1px;height:14px;background:#ffffff;"></div><div style="left:698px;top:184px;width:16px;height:1px;background:#000000;"></div><div style="left:713px;top:171px;width:1px;height:14px;background:#000000;"></div><div style="left:699px;top:183px;width:14px;height:1px;background:#808080;"></div><div style="left:712px;top:172px;width:1px;height:12px;background:#808080;"></div><svg style="left:701px;top:173px" width="9" height="9"><path d="M0 0h9v9h-9z M1 2v6h7v-6z" fill="#000" fill-rule="evenodd"/></svg><div style="left:682px;top:171px;width:16px;height:14px;background:#c0c0c0;"></div><div style="left:682px;top:171px;width:16px;height:1px;background:#ffffff;"></div><div style="left:682px;top:171px;width:1px;height:14px;background:#ffffff;"></div><div style="left:682px;top:184px;width:16px;height:1px;background:#000000;"></div><div style="left:697px;top:171px;width:1px;height:14px;background:#000000;"></div><div style="left:683px;top:183px;width:14px;height:1px;background:#808080;"></div><div style="left:696px;top:172px;width:1px;height:12px;background:#808080;"></div><div style="left:686px;top:180px;width:6px;height:2px;background:#000"></div><div style="left:629px;top:188px;width:105px;height:1px;background:#808080;"></div><div style="left:629px;top:188px;width:1px;height:64px;background:#808080;"></div><div style="left:629px;top:251px;width:105px;height:1px;background:#ffffff;"></div><div style="left:733px;top:188px;width:1px;height:64px;background:#ffffff;"></div><div style="left:630px;top:189px;width:103px;height:1px;background:#000000;"></div><div style="left:630px;top:189px;width:1px;height:62px;background:#000000;"></div><div style="left:630px;top:250px;width:103px;height:1px;background:#dfdfdf;"></div><div style="left:732px;top:189px;width:1px;height:62px;background:#dfdfdf;"></div><div style="left:631px;top:190px;width:101px;height:60px;overflow:hidden"><div style="left:0px;top:0px;width:20px;height:60px"><svg width="100%" height="100%" style="position:static;display:block"><defs><pattern id="ck5" width="8" height="8" patternUnits="userSpaceOnUse"><rect width="8" height="8" fill="#fcfcfc"/><path d="M0 0L8 8M8 0L0 8" stroke="#b0b0b0" stroke-width="1"/></pattern></defs><rect width="100%" height="100%" fill="url(#ck5)"/></svg></div><div style="left:80px;top:0px;width:20px;height:60px"><svg width="100%" height="100%" style="position:static;display:block"><defs><pattern id="ck6" width="8" height="8" patternUnits="userSpaceOnUse"><rect width="8" height="8" fill="#fcfcfc"/><path d="M0 0L8 8M8 0L0 8" stroke="#b0b0b0" stroke-width="1"/></pattern></defs><rect width="100%" height="100%" fill="url(#ck6)"/></svg></div><svg style="left:20px;top:0" width="60" height="60" shape-rendering="crispEdges"><rect width="60" height="60" fill="#444444"/><path d="M0 38 L8 39 L20 38 L35 37 L45 37 L55 38 L60 38" fill="none" stroke="#000" stroke-width="1.5"/><rect x="40" y="0" width="1" height="60" fill="#c2c6be"/></svg></div><div style="left:397px;top:248px;width:132px;height:91px;background:#c0c0c0;"></div><div style="left:397px;top:248px;width:132px;height:1px;background:#dfdfdf;"></div><div style="left:397px;top:248px;width:1px;height:91px;background:#dfdfdf;"></div><div style="left:397px;top:338px;width:132px;height:1px;background:#000000;"></div><div style="left:528px;top:248px;width:1px;height:91px;background:#000000;"></div><div style="left:398px;top:249px;width:130px;height:1px;background:#ffffff;"></div><div style="left:398px;top:249px;width:1px;height:89px;background:#ffffff;"></div><div style="left:398px;top:337px;width:130px;height:1px;background:#808080;"></div><div style="left:527px;top:249px;width:1px;height:89px;background:#808080;"></div><div style="left:401px;top:252px;width:124px;height:18px;background:linear-gradient(to right,#000080,#1084d0);"></div><svg style="left:404px;top:253px" width="16" height="16" shape-rendering="crispEdges"><path d="M2 1h8l3 3v11h-11z" fill="#fff"/><path d="M9.5 1.5l3 3h-3" fill="none" stroke="#000"/><path d="M2 1l5 5" stroke="#000" stroke-width="1.2" shape-rendering="auto"/><circle cx="7.5" cy="8" r="3" fill="#901010" shape-rendering="auto"/><circle cx="6" cy="6.8" r="1.2" fill="#708020" shape-rendering="auto"/><circle cx="9.3" cy="8.5" r="0.9" fill="#203080" shape-rendering="auto"/><path d="M9 10h4v1h-3v1h3v3h-4v-1h3v-1h-3z" fill="#000"/></svg><div class="t" style="left:421px;top:255px;font-size:12px;color:#fff;font-weight:bold;">Image...</div><div style="left:507px;top:254px;width:16px;height:14px;background:#c0c0c0;"></div><div style="left:507px;top:254px;width:16px;height:1px;background:#ffffff;"></div><div style="left:507px;top:254px;width:1px;height:14px;background:#ffffff;"></div><div style="left:507px;top:267px;width:16px;height:1px;background:#000000;"></div><div style="left:522px;top:254px;width:1px;height:14px;background:#000000;"></div><div style="left:508px;top:266px;width:14px;height:1px;background:#808080;"></div><div style="left:521px;top:255px;width:1px;height:12px;background:#808080;"></div><svg style="left:511px;top:257px" width="8" height="7"><path d="M0 0h2v1h-2zM6 0h2v1h-2zM1 1h2v1h-2zM5 1h2v1h-2zM2 2h4v1h-4zM3 3h2v1h-2zM2 4h4v1h-4zM1 5h2v1h-2zM5 5h2v1h-2zM0 6h2v1h-2zM6 6h2v1h-2z" fill="#000" shape-rendering="crispEdges"/></svg><div style="left:489px;top:254px;width:16px;height:14px;background:#c0c0c0;"></div><div style="left:489px;top:254px;width:16px;height:1px;background:#ffffff;"></div><div style="left:489px;top:254px;width:1px;height:14px;background:#ffffff;"></div><div style="left:489px;top:267px;width:16px;height:1px;background:#000000;"></div><div style="left:504px;top:254px;width:1px;height:14px;background:#000000;"></div><div style="left:490px;top:266px;width:14px;height:1px;background:#808080;"></div><div style="left:503px;top:255px;width:1px;height:12px;background:#808080;"></div><svg style="left:492px;top:256px" width="9" height="9"><path d="M0 0h9v9h-9z M1 2v6h7v-6z" fill="#000" fill-rule="evenodd"/></svg><div style="left:473px;top:254px;width:16px;height:14px;background:#c0c0c0;"></div><div style="left:473px;top:254px;width:16px;height:1px;background:#ffffff;"></div><div style="left:473px;top:254px;width:1px;height:14px;background:#ffffff;"></div><div style="left:473px;top:267px;width:16px;height:1px;background:#000000;"></div><div style="left:488px;top:254px;width:1px;height:14px;background:#000000;"></div><div style="left:474px;top:266px;width:14px;height:1px;background:#808080;"></div><div style="left:487px;top:255px;width:1px;height:12px;background:#808080;"></div><div style="left:477px;top:263px;width:6px;height:2px;background:#000"></div><div style="left:401px;top:271px;width:124px;height:1px;background:#808080;"></div><div style="left:401px;top:271px;width:1px;height:64px;background:#808080;"></div><div style="left:401px;top:334px;width:124px;height:1px;background:#ffffff;"></div><div style="left:524px;top:271px;width:1px;height:64px;background:#ffffff;"></div><div style="left:402px;top:272px;width:122px;height:1px;background:#000000;"></div><div style="left:402px;top:272px;width:1px;height:62px;background:#000000;"></div><div style="left:402px;top:333px;width:122px;height:1px;background:#dfdfdf;"></div><div style="left:523px;top:272px;width:1px;height:62px;background:#dfdfdf;"></div><div style="left:403px;top:273px;width:120px;height:60px;overflow:hidden"><svg style="left:0;top:0" width="120" height="60" shape-rendering="crispEdges"><rect width="120" height="60" fill="#444444"/><path d="M20 0 L19 15 L18 30 L19 45 L20 60 L99 60 L100 45 L101 30 L100 15 L99 0 Z" fill="#868a84"/><rect x="60" y="0" width="1" height="60" fill="#c2c6be"/></svg></div><div style="left:700px;top:457px;width:41px;height:91px;background:#c0c0c0;"></div><div style="left:700px;top:457px;width:41px;height:1px;background:#dfdfdf;"></div><div style="left:700px;top:457px;width:1px;height:91px;background:#dfdfdf;"></div><div style="left:700px;top:547px;width:41px;height:1px;background:#000000;"></div><div style="left:740px;top:457px;width:1px;height:91px;background:#000000;"></div><div style="left:701px;top:458px;width:39px;height:1px;background:#ffffff;"></div><div style="left:701px;top:458px;width:1px;height:89px;background:#ffffff;"></div><div style="left:701px;top:546px;width:39px;height:1px;background:#808080;"></div><div style="left:739px;top:458px;width:1px;height:89px;background:#808080;"></div><div style="left:704px;top:461px;width:33px;height:18px;background:linear-gradient(to right,#808080,#c0c0c0);"></div><div style="left:719px;top:463px;width:16px;height:14px;background:#c0c0c0;"></div><div style="left:719px;top:463px;width:16px;height:1px;background:#ffffff;"></div><div style="left:719px;top:463px;width:1px;height:14px;background:#ffffff;"></div><div style="left:719px;top:476px;width:16px;height:1px;background:#000000;"></div><div style="left:734px;top:463px;width:1px;height:14px;background:#000000;"></div><div style="left:720px;top:475px;width:14px;height:1px;background:#808080;"></div><div style="left:733px;top:464px;width:1px;height:12px;background:#808080;"></div><svg style="left:723px;top:466px" width="8" height="7"><path d="M0 0h2v1h-2zM6 0h2v1h-2zM1 1h2v1h-2zM5 1h2v1h-2zM2 2h4v1h-4zM3 3h2v1h-2zM2 4h4v1h-4zM1 5h2v1h-2zM5 5h2v1h-2zM0 6h2v1h-2zM6 6h2v1h-2z" fill="#000" shape-rendering="crispEdges"/></svg><div style="left:704px;top:480px;width:33px;height:64px;background:#444444;"></div><div style="left:704px;top:480px;width:33px;height:1px;background:#808080;"></div><div style="left:704px;top:480px;width:1px;height:64px;background:#808080;"></div><div style="left:704px;top:543px;width:33px;height:1px;background:#ffffff;"></div><div style="left:736px;top:480px;width:1px;height:64px;background:#ffffff;"></div><div style="left:705px;top:481px;width:31px;height:1px;background:#000000;"></div><div style="left:705px;top:481px;width:1px;height:62px;background:#000000;"></div><div style="left:705px;top:542px;width:31px;height:1px;background:#dfdfdf;"></div><div style="left:735px;top:481px;width:1px;height:62px;background:#dfdfdf;"></div><div style="left:536px;top:339px;width:192px;height:219px;background:#c0c0c0;"></div><div style="left:536px;top:339px;width:192px;height:1px;background:#dfdfdf;"></div><div style="left:536px;top:339px;width:1px;height:219px;background:#dfdfdf;"></div><div style="left:536px;top:557px;width:192px;height:1px;background:#000000;"></div><div style="left:727px;top:339px;width:1px;height:219px;background:#000000;"></div><div style="left:537px;top:340px;width:190px;height:1px;background:#ffffff;"></div><div style="left:537px;top:340px;width:1px;height:217px;background:#ffffff;"></div><div style="left:537px;top:556px;width:190px;height:1px;background:#808080;"></div><div style="left:726px;top:340px;width:1px;height:217px;background:#808080;"></div><div style="left:539px;top:342px;width:186px;height:15px;background:linear-gradient(to right,#000080,#1084d0);"></div><div class="t" style="left:542px;top:344px;font-size:10.5px;color:#fff;font-weight:normal;">Controls</div><div style="left:711px;top:344px;width:12px;height:11px;background:#c0c0c0;"></div><div style="left:711px;top:344px;width:12px;height:1px;background:#ffffff;"></div><div style="left:711px;top:344px;width:1px;height:11px;background:#ffffff;"></div><div style="left:711px;top:354px;width:12px;height:1px;background:#000000;"></div><div style="left:722px;top:344px;width:1px;height:11px;background:#000000;"></div><div style="left:712px;top:353px;width:10px;height:1px;background:#808080;"></div><div style="left:721px;top:345px;width:1px;height:9px;background:#808080;"></div><svg style="left:714px;top:346px" width="6" height="6"><path d="M0 0h1.5l1.5 1.5 1.5-1.5h1.5v1l-1.8 2 1.8 2v1h-1.5l-1.5-1.5-1.5 1.5h-1.5v-1l1.8-2-1.8-2z" fill="#000"/></svg><div style="left:539px;top:378px;width:186px;height:177px;background:#c0c0c0;"></div><div style="left:539px;top:378px;width:186px;height:1px;background:#ffffff;"></div><div style="left:539px;top:378px;width:1px;height:177px;background:#ffffff;"></div><div style="left:539px;top:554px;width:186px;height:1px;background:#000000;"></div><div style="left:724px;top:378px;width:1px;height:177px;background:#000000;"></div><div style="left:540px;top:553px;width:184px;height:1px;background:#808080;"></div><div style="left:723px;top:379px;width:1px;height:175px;background:#808080;"></div><div style="left:617px;top:361px;width:55px;height:17px;background:#c0c0c0;"></div><div style="left:618px;top:361px;width:52px;height:1px;background:#ffffff;"></div><div style="left:617px;top:362px;width:1px;height:16px;background:#ffffff;"></div><div style="left:671px;top:362px;width:1px;height:16px;background:#000000;"></div><div style="left:670px;top:362px;width:1px;height:16px;background:#808080;"></div><div class="t" style="left:621px;top:364px;font-size:11px;color:#000;font-weight:normal;">Brush Tip</div><div style="left:539px;top:358px;width:78px;height:21px;background:#c0c0c0;"></div><div style="left:541px;top:358px;width:74px;height:1px;background:#ffffff;"></div><div style="left:539px;top:360px;width:1px;height:19px;background:#ffffff;"></div><div style="left:540px;top:359px;width:1px;height:1px;background:#ffffff;"></div><div style="left:616px;top:360px;width:1px;height:19px;background:#000000;"></div><div style="left:615px;top:359px;width:1px;height:20px;background:#808080;"></div><div style="left:540px;top:378px;width:76px;height:1px;background:#c0c0c0;"></div><div class="t" style="left:548px;top:362px;font-size:10.5px;color:#000;font-weight:normal;">Tool Controls</div><div class="t" style="left:617px;top:437px;font-size:11px;color:#000;font-weight:normal;">Zoom</div><div style="left:607px;top:457px;width:47px;height:21px;background:#fff;"></div><div style="left:607px;top:457px;width:47px;height:1px;background:#808080;"></div><div style="left:607px;top:457px;width:1px;height:21px;background:#808080;"></div><div style="left:607px;top:477px;width:47px;height:1px;background:#ffffff;"></div><div style="left:653px;top:457px;width:1px;height:21px;background:#ffffff;"></div><div style="left:608px;top:458px;width:45px;height:1px;background:#000000;"></div><div style="left:608px;top:458px;width:1px;height:19px;background:#000000;"></div><div style="left:608px;top:476px;width:45px;height:1px;background:#dfdfdf;"></div><div style="left:652px;top:458px;width:1px;height:19px;background:#dfdfdf;"></div><div class="t" style="left:612px;top:462px;font-size:11px;color:#000;font-weight:normal;">1:1</div><div style="left:637px;top:459px;width:15px;height:17px;background:#c0c0c0;"></div><div style="left:637px;top:459px;width:15px;height:1px;background:#ffffff;"></div><div style="left:637px;top:459px;width:1px;height:17px;background:#ffffff;"></div><div style="left:637px;top:475px;width:15px;height:1px;background:#000000;"></div><div style="left:651px;top:459px;width:1px;height:17px;background:#000000;"></div><div style="left:638px;top:474px;width:13px;height:1px;background:#808080;"></div><div style="left:650px;top:460px;width:1px;height:15px;background:#808080;"></div><svg style="left:641px;top:465px" width="7" height="4"><path d="M0 0h7l-3.5 4z" fill="#000"/></svg><div style="left:2px;top:42px;width:1px;height:22px;background:#ffffff;"></div><div style="left:3px;top:42px;width:1px;height:22px;background:#808080;"></div><div style="left:5px;top:42px;width:1px;height:22px;background:#ffffff;"></div><div style="left:6px;top:42px;width:1px;height:22px;background:#808080;"></div><svg style="left:16px;top:45px" width="12" height="14" shape-rendering="crispEdges"><path d="M0.5 0.5h7l3 3v9h-10z" fill="#fff" stroke="#000"/><path d="M7.5 0.5v3h3" fill="none" stroke="#000"/></svg><svg style="left:37px;top:44px" width="16" height="15" shape-rendering="crispEdges"><path d="M0.5 13.5v-10h5l1 1h5v3" fill="#ffff80" stroke="#000"/><path d="M0.5 13.5l3-6h11l-3 6z" fill="#808000" stroke="#000"/><path d="M9 2q3-2 5 0v2" fill="none" stroke="#000"/><path d="M12 3h3l-1.5 2z" fill="#000"/></svg><svg style="left:60px;top:45px" width="15" height="14" shape-rendering="crispEdges"><rect x="0.5" y="0.5" width="13" height="12" fill="#808000" stroke="#000"/><rect x="3" y="1" width="8" height="6" fill="#c0c0c0"/><rect x="3" y="8" width="8" height="5" fill="#000"/><rect x="8" y="9" width="2" height="3" fill="#808000"/></svg><svg style="left:82px;top:45px" width="16" height="14" shape-rendering="crispEdges"><path d="M3.5 5.5l2-5h8l-2 5z" fill="#fff" stroke="#000"/><path d="M0.5 7.5q0-2 2-2h11q2 0 2 2v4q0 2-2 2h-11q-2 0-2-2z" fill="#c0c0c0" stroke="#000"/><rect x="1" y="9" width="14" height="2" fill="#000"/><rect x="7" y="9" width="5" height="1" fill="#e0e000"/><path d="M2 12h12" stroke="#fff"/></svg><div style="left:105px;top:43px;width:1px;height:20px;background:#808080;"></div><div style="left:106px;top:43px;width:1px;height:20px;background:#ffffff;"></div><svg style="left:112px;top:45px" width="17" height="14" shape-rendering="crispEdges"><path d="M4 5q2-4 6-4q4 0 4 4q0 3-4 4" fill="none" stroke="#000" stroke-width="1.2" shape-rendering="auto"/><path d="M1 3l2 5 4-3z" fill="#000"/><path d="M1 12.5h8" stroke="#000"/><path d="M10 12.5h6" stroke="#000" stroke-dasharray="1 1"/></svg><svg style="left:137px;top:45px" width="17" height="14" shape-rendering="crispEdges"><path d="M13 5q-2-4-6-4q-4 0-4 4q0 3 4 4" fill="none" stroke="#808080" stroke-width="1.2" shape-rendering="auto"/><path d="M16 3l-2 5-4-3z" fill="#808080"/><path d="M8 12.5h8" stroke="#808080"/><path d="M1 12.5h6" stroke="#808080" stroke-dasharray="1 1"/><path d="M2 13.5h15" stroke="#fff"/></svg><svg style="left:162px;top:44px" width="11" height="16" shape-rendering="crispEdges"><path d="M2 0l5 9M9 0l-5 9" stroke="#000"/><circle cx="3" cy="12" r="2.5" fill="none" stroke="#000080" stroke-width="1.3"/><circle cx="8" cy="12" r="2.5" fill="none" stroke="#000080" stroke-width="1.3"/></svg><svg style="left:182px;top:45px" width="16" height="14" shape-rendering="crispEdges"><path d="M0.5 0.5h6l2 2v7h-8z" fill="#fff" stroke="#000"/><path d="M6.5 4.5h6l2 2v7h-8z" fill="#fff" stroke="#000080"/><path d="M2 3h4M2 5h4M2 7h4M8 8h5M8 10h5" stroke="#000"/></svg><svg style="left:205px;top:44px" width="17" height="16" shape-rendering="crispEdges"><rect x="0.5" y="1.5" width="12" height="13" fill="#808060" stroke="#000"/><path d="M3.5 2.5l2-2h2l2 2v1h-6z" fill="#c0c0c0" stroke="#000"/><path d="M6.5 7.5h7l2 2v5h-9z" fill="#fff" stroke="#000080"/><path d="M8 10h4M8 12h6" stroke="#000"/></svg><div style="left:229px;top:43px;width:1px;height:20px;background:#808080;"></div><div style="left:230px;top:43px;width:1px;height:20px;background:#ffffff;"></div><svg style="left:235px;top:44px" width="17" height="16" shape-rendering="crispEdges"><rect x="0.5" y="0.5" width="16" height="11" fill="#000"/><rect x="2" y="2" width="13" height="8" fill="#fff"/><rect x="2" y="7" width="13" height="3" fill="#0000a0"/><circle cx="8.5" cy="7" r="2" fill="#e00000"/><rect x="7" y="12" width="3" height="2" fill="#000"/><rect x="4" y="14" width="9" height="1" fill="#000"/></svg><svg style="left:259px;top:44px" width="17" height="17" shape-rendering="crispEdges"><circle cx="8.5" cy="8.5" r="7.5" fill="none" stroke="#808080" stroke-width="1.2"/><circle cx="8.5" cy="8.5" r="6.5" fill="none" stroke="#fff"/><circle cx="6.5" cy="6.5" r="2.5" fill="none" stroke="#808080"/><path d="M8 8l5 5" stroke="#808080"/></svg><div style="left:282px;top:43px;width:1px;height:20px;background:#808080;"></div><div style="left:283px;top:43px;width:1px;height:20px;background:#ffffff;"></div><div style="left:287px;top:41px;width:23px;height:23px;background:#cacaca;"></div><div style="left:287px;top:41px;width:23px;height:1px;background:#808080;"></div><div style="left:287px;top:41px;width:1px;height:23px;background:#808080;"></div><div style="left:287px;top:63px;width:23px;height:1px;background:#ffffff;"></div><div style="left:309px;top:41px;width:1px;height:23px;background:#ffffff;"></div><div style="left:310px;top:41px;width:23px;height:23px;background:#cacaca;"></div><div style="left:310px;top:41px;width:23px;height:1px;background:#808080;"></div><div style="left:310px;top:41px;width:1px;height:23px;background:#808080;"></div><div style="left:310px;top:63px;width:23px;height:1px;background:#ffffff;"></div><div style="left:332px;top:41px;width:1px;height:23px;background:#ffffff;"></div><div style="left:333px;top:41px;width:23px;height:23px;background:#cacaca;"></div><div style="left:333px;top:41px;width:23px;height:1px;background:#808080;"></div><div style="left:333px;top:41px;width:1px;height:23px;background:#808080;"></div><div style="left:333px;top:63px;width:23px;height:1px;background:#ffffff;"></div><div style="left:355px;top:41px;width:1px;height:23px;background:#ffffff;"></div><svg style="left:289px;top:45px" width="18" height="17" shape-rendering="crispEdges"><path d="M15 3.5A5 5 0 1 0 14.5 10" fill="none" stroke="#404040" stroke-width="3" shape-rendering="auto"/><path d="M8 10l-6 6" stroke="#404040" stroke-width="3" shape-rendering="auto"/><path d="M14.5 3A4.5 4.5 0 1 0 14 9.5" fill="none" stroke="#fff" stroke-width="1.8" shape-rendering="auto"/><path d="M7.5 9.5l-6 6" stroke="#fff" stroke-width="1.8" shape-rendering="auto"/></svg><svg style="left:314px;top:48px" width="17" height="11" shape-rendering="crispEdges"><rect width="17" height="11" fill="#000"/><rect x="1" y="2" width="15" height="8" fill="#fff"/><rect x="1" y="0" width="15" height="2" fill="#0000c0"/><rect x="2" y="4" width="10" height="4" fill="#000"/><rect x="3" y="5" width="2" height="2" fill="#fff"/><rect x="6" y="5" width="2" height="2" fill="#fff"/><rect x="9" y="5" width="2" height="2" fill="#fff"/><rect x="13" y="3" width="2" height="6" fill="#000"/><rect x="12" y="4" width="4" height="1" fill="#000"/><rect x="12" y="7" width="4" height="1" fill="#000"/></svg><svg style="left:338px;top:46px" width="15" height="14" shape-rendering="crispEdges"><rect x="0.0" y="0" width="2.6" height="14" fill="#a00000"/><rect x="2.5" y="0" width="2.6" height="14" fill="#fff"/><rect x="5.0" y="0" width="2.6" height="14" fill="#0000c0"/><rect x="7.5" y="0" width="2.6" height="14" fill="#00e0e0"/><rect x="10.0" y="0" width="2.6" height="14" fill="#00a000"/><rect x="12.5" y="0" width="2.6" height="14" fill="#ffff00"/><path d="M2.8 0 l1 1 l-1 1 l1 1 l-1 1 l1 1 l-1 1 l1 1 l-1 1 l1 1 l-1 1 l1 1 l-1 1 l1 1 l-1 1" fill="none" stroke="#fff" stroke-width="0.8" shape-rendering="auto"/><path d="M5.3 0 l1 1 l-1 1 l1 1 l-1 1 l1 1 l-1 1 l1 1 l-1 1 l1 1 l-1 1 l1 1 l-1 1 l1 1 l-1 1" fill="none" stroke="#fff" stroke-width="0.8" shape-rendering="auto"/><path d="M7.8 0 l1 1 l-1 1 l1 1 l-1 1 l1 1 l-1 1 l1 1 l-1 1 l1 1 l-1 1 l1 1 l-1 1 l1 1 l-1 1" fill="none" stroke="#fff" stroke-width="0.8" shape-rendering="auto"/><path d="M10.3 0 l1 1 l-1 1 l1 1 l-1 1 l1 1 l-1 1 l1 1 l-1 1 l1 1 l-1 1 l1 1 l-1 1 l1 1 l-1 1" fill="none" stroke="#fff" stroke-width="0.8" shape-rendering="auto"/><path d="M12.8 0 l1 1 l-1 1 l1 1 l-1 1 l1 1 l-1 1 l1 1 l-1 1 l1 1 l-1 1 l1 1 l-1 1 l1 1 l-1 1" fill="none" stroke="#fff" stroke-width="0.8" shape-rendering="auto"/></svg><svg style="left:358px;top:44px" width="17" height="15" shape-rendering="crispEdges"><rect x="0.5" y="0.5" width="16" height="14" fill="#fff" stroke="#000"/><path d="M1 14v-6h1v-2h1v3h1v-5h1v4h1v-2h1v3h1v-6h1v5h1v-3h1v4h1v-2h1v-4h1v5h1v6z" fill="#000"/></svg><svg style="left:382px;top:45px" width="17" height="15" shape-rendering="crispEdges"><rect x="0.5" y="0.5" width="9" height="11" fill="#e00000" stroke="#000"/><rect x="5.5" y="2.5" width="10" height="12" fill="#00e0e0" stroke="#000"/></svg><div style="left:405px;top:43px;width:1px;height:20px;background:#808080;"></div><div style="left:406px;top:43px;width:1px;height:20px;background:#ffffff;"></div><svg style="left:412px;top:44px" width="16" height="16" shape-rendering="crispEdges"><path d="M1 1v12l3-3 3 5 2-1-3-5h4z" fill="#000"/><text x="7" y="12" font-size="14" font-weight="bold" font-family="Liberation Sans" fill="#000080">?</text></svg><div style="left:437px;top:43px;width:1px;height:20px;background:#808080;"></div><div style="left:438px;top:43px;width:1px;height:20px;background:#ffffff;"></div><svg style="left:444px;top:45px" width="14" height="14" shape-rendering="crispEdges"><path d="M6 0h2v4h-2z" fill="#000"/><path d="M0 6h14l-7 7z" fill="#fff" stroke="#808080"/><rect x="3" y="7" width="8" height="1" fill="#e0c000"/><rect x="4" y="8" width="6" height="1" fill="#00a000"/><rect x="5" y="9" width="4" height="1" fill="#000080"/></svg><svg style="left:467px;top:45px" width="16" height="14" shape-rendering="crispEdges"><path d="M8 1l7 7h-4v5h-6v-5h-4z" fill="#808080"/><path d="M5 13h6" stroke="#fff"/></svg><div style="left:488px;top:41px;width:1px;height:25px;background:#808080;"></div><div style="left:489px;top:41px;width:1px;height:25px;background:#ffffff;"></div><div style="left:0px;top:67px;width:28px;height:1px;background:#ffffff;"></div><div style="left:1px;top:70px;width:24px;height:1px;background:#ffffff;"></div><div style="left:1px;top:71px;width:24px;height:1px;background:#808080;"></div><div style="left:1px;top:73px;width:24px;height:1px;background:#ffffff;"></div><div style="left:1px;top:74px;width:24px;height:1px;background:#808080;"></div><div style="left:25px;top:70px;width:1px;height:2px;background:#808080;"></div><div style="left:25px;top:73px;width:1px;height:2px;background:#808080;"></div><div style="left:0px;top:520px;width:28px;height:1px;background:#808080;"></div><div style="left:0px;top:521px;width:28px;height:1px;background:#ffffff;"></div><div style="left:2px;top:166px;width:23px;height:22px;background:#cacaca;"></div><div style="left:2px;top:166px;width:23px;height:1px;background:#808080;"></div><div style="left:2px;top:166px;width:1px;height:22px;background:#808080;"></div><div style="left:2px;top:187px;width:23px;height:1px;background:#ffffff;"></div><div style="left:24px;top:166px;width:1px;height:22px;background:#ffffff;"></div><svg style="left:0px;top:76px" width="24" height="22" shape-rendering="crispEdges"><path d="M5 5L17 10L14 12L21 18L19 20L12 14L10 17Z" fill="#fff" stroke="#000" stroke-width="1.2" stroke-linejoin="miter" shape-rendering="auto"/></svg><svg style="left:4px;top:101px" width="18" height="18" shape-rendering="crispEdges"><circle cx="7" cy="7.5" r="5.5" fill="#c0c0c0" stroke="#000" stroke-width="1.3" shape-rendering="auto"/><path d="M11 11.5l5 5" stroke="#000" stroke-width="2.2" shape-rendering="auto"/><path d="M5 9q2 2 4 0" stroke="#808080" fill="none" shape-rendering="auto"/></svg><svg style="left:6px;top:126px" width="14" height="14" shape-rendering="crispEdges"><rect x="0" y="0" width="2" height="2" fill="#000"/><rect x="0" y="6" width="2" height="2" fill="#000"/><rect x="0" y="12" width="2" height="2" fill="#000"/><rect x="6" y="0" width="2" height="2" fill="#000"/><rect x="6" y="12" width="2" height="2" fill="#000"/><rect x="12" y="0" width="2" height="2" fill="#000"/><rect x="12" y="6" width="2" height="2" fill="#000"/><rect x="12" y="12" width="2" height="2" fill="#000"/><rect x="1" y="3" width="1" height="2" fill="#000"/><rect x="13" y="3" width="1" height="2" fill="#000"/><rect x="1" y="9" width="1" height="2" fill="#000"/><rect x="13" y="9" width="1" height="2" fill="#000"/><rect x="3" y="0" width="2" height="1" fill="#000"/><rect x="9" y="0" width="2" height="1" fill="#000"/><rect x="3" y="13" width="2" height="1" fill="#000"/><rect x="9" y="13" width="2" height="1" fill="#000"/><rect x="6" y="4" width="2" height="6" fill="#808080"/></svg><svg style="left:4px;top:146px" width="18" height="16" shape-rendering="crispEdges"><path d="M5 0v12h12M1 4h11v11" fill="none" stroke="#000" stroke-width="2.2"/><path d="M6 11l11-11" stroke="#000"/></svg><svg style="left:6px;top:170px" width="15" height="15" shape-rendering="crispEdges"><path d="M7.5 0v15M0 7.5h15" stroke="#000" stroke-width="1.3"/><path d="M7.5 0l-3 3h6zM7.5 15l-3-3h6zM0 7.5l3-3v6zM15 7.5l-3-3v6z" fill="#000"/></svg><svg style="left:6px;top:194px" width="16" height="11" shape-rendering="crispEdges"><rect x="0.5" y="0.5" width="14" height="9" fill="none" stroke="#000" stroke-dasharray="2 1"/></svg><svg style="left:4px;top:212px" width="18" height="17" shape-rendering="crispEdges"><ellipse cx="10" cy="5" rx="7" ry="3.5" fill="none" stroke="#404000" stroke-width="3"/><ellipse cx="10" cy="5" rx="7" ry="3.5" fill="none" stroke="#ffff40" stroke-width="1.5"/><path d="M6 8q-3 1-1 4l1 4" stroke="#404000" stroke-width="3" fill="none"/><path d="M6 8q-3 1-1 4l1 4" stroke="#ffff40" stroke-width="1.4" fill="none"/></svg><svg style="left:5px;top:234px" width="17" height="16" shape-rendering="crispEdges"><path d="M1.5 14l11-10" stroke="#000" stroke-width="3"/><path d="M2 13.5l3-3" stroke="#fff" stroke-width="1"/><path d="M13 0v6M10 3h6M11 1l4 4M15 1l-4 4" stroke="#e0e080"/></svg><svg style="left:5px;top:256px" width="17" height="16" shape-rendering="crispEdges"><circle cx="13" cy="3" r="3" fill="#c00000"/><path d="M2 14l9-9" stroke="#000" stroke-width="3"/><path d="M3 13l7-7" stroke="#fff" stroke-width="1"/><path d="M1 15h5" stroke="#00c0c0" stroke-width="1.5"/></svg><svg style="left:5px;top:279px" width="17" height="16" shape-rendering="crispEdges"><path d="M1 15q3-6 7-6l2 2q-3 4-9 4z" fill="#e0e000" stroke="#000"/><path d="M9 10l6-7" stroke="#a00000" stroke-width="3"/></svg><svg style="left:5px;top:300px" width="17" height="16" shape-rendering="crispEdges"><path d="M2 5q5-5 12-3" stroke="#000" fill="none" stroke-width="1.5"/><path d="M1 15q3-5 7-6l2 2q-3 4-9 4z" fill="#e0e000" stroke="#000"/><path d="M9 10l6-7" stroke="#404040" stroke-width="2.5"/></svg><svg style="left:5px;top:324px" width="16" height="13" shape-rendering="crispEdges"><rect width="16" height="13" fill="#000"/><rect x="1" y="1" width="14" height="11" fill="#0000c0"/><path d="M1 1h7v3h2l5 2.5-5 2.5v0h-2v3h-7z" fill="#e01010"/><path d="M9.5 2.5l4.5 4-4.5 4" fill="none" stroke="#e0a0ff" stroke-width="0.8" shape-rendering="auto"/></svg><svg style="left:5px;top:344px" width="16" height="16" shape-rendering="crispEdges"><path d="M1 3l6 5v-5l6 4 2 3-2 5h-4l-6-4z" fill="#fff" stroke="#000"/></svg><svg style="left:3px;top:365px" width="20" height="18" shape-rendering="crispEdges"><path d="M6 11L16 2L20 6L10 15Z" fill="#a01010" stroke="#000" stroke-width="0.8"/><path d="M9 7l3 3" stroke="#ffff00"/><path d="M6 11L10 15L7 17Q3 17 3 14Z" fill="#fff" stroke="#000" stroke-width="1"/></svg><svg style="left:5px;top:388px" width="17" height="16" shape-rendering="crispEdges"><rect x="1" y="1" width="8" height="5" fill="#00c0c0" stroke="#000" stroke-width="0.8"/><rect x="3" y="6" width="4" height="3" fill="#00c0c0"/><path d="M1 15q3-5 6-6l2 2q-3 4-8 4z" fill="#e0e000" stroke="#000"/><path d="M8 10l7-8" stroke="#a00000" stroke-width="2.5"/></svg><svg style="left:5px;top:410px" width="17" height="16" shape-rendering="crispEdges"><rect x="4" y="7" width="11" height="8" fill="#00a0c0" stroke="#000"/><rect x="3" y="5" width="13" height="2" fill="#000"/><circle cx="9.5" cy="3" r="1.5" fill="none" stroke="#000"/><path d="M0 3h2M1 5h2M0 7h1" stroke="#0000c0"/></svg><svg style="left:3px;top:430px" width="19" height="17" shape-rendering="crispEdges"><path d="M9 1l8 8-6 6-8-8z" fill="#00c0c0" stroke="#000"/><path d="M2 10v4M1 13l1 2 1-2" stroke="#000080"/></svg><div class="t" style="left:6px;top:452px;font-family:Liberation Serif;font-size:19px;font-weight:bold;line-height:19px">A</div><svg style="left:5px;top:477px" width="16" height="16" shape-rendering="crispEdges"><path d="M1 15l13-13" stroke="#000080" stroke-width="1.2" shape-rendering="auto"/></svg><svg style="left:5px;top:499px" width="16" height="15" shape-rendering="crispEdges"><rect x="0.5" y="0.5" width="14" height="12" fill="none" stroke="#000080" stroke-width="1.3"/><path d="M1 14h14M15 1v13" stroke="#fff"/></svg><div style="left:745px;top:67px;width:55px;height:1px;background:#ffffff;"></div><div style="left:744px;top:67px;width:1px;height:486px;background:#ffffff;"></div><div style="left:748px;top:72px;width:48px;height:1px;background:#808080;"></div><div style="left:748px;top:72px;width:1px;height:99px;background:#808080;"></div><div style="left:748px;top:170px;width:48px;height:1px;background:#808080;"></div><div style="left:795px;top:72px;width:1px;height:99px;background:#808080;"></div><div style="left:749px;top:73px;width:47px;height:1px;background:#ffffff;"></div><div style="left:749px;top:73px;width:1px;height:98px;background:#ffffff;"></div><div style="left:748px;top:171px;width:49px;height:1px;background:#ffffff;"></div><div style="left:796px;top:72px;width:1px;height:100px;background:#ffffff;"></div><div style="left:750px;top:74px;width:45px;height:96px;background:linear-gradient(to bottom,#ff0000 2%,#ffff00 17%,#00ff00 34%,#00ffff 52%,#0000ff 69%,#ff00ff 87%,#ff0060)"></div><div style="left:750px;top:74px;width:45px;height:96px;background:linear-gradient(to right,#000 0%,rgba(0,0,0,0.7) 15%,rgba(0,0,0,0.15) 45%,rgba(0,0,0,0) 52%,rgba(255,255,255,0) 62%,rgba(255,255,255,0.75) 92%,rgba(255,255,255,0.9))"></div><div style="left:748px;top:175px;width:48px;height:1px;background:#808080;"></div><div style="left:748px;top:175px;width:1px;height:38px;background:#808080;"></div><div style="left:748px;top:212px;width:48px;height:1px;background:#808080;"></div><div style="left:795px;top:175px;width:1px;height:38px;background:#808080;"></div><div style="left:749px;top:176px;width:47px;height:1px;background:#ffffff;"></div><div style="left:749px;top:176px;width:1px;height:37px;background:#ffffff;"></div><div style="left:748px;top:213px;width:49px;height:1px;background:#ffffff;"></div><div style="left:796px;top:175px;width:1px;height:39px;background:#ffffff;"></div><div style="left:765px;top:189px;width:29px;height:22px;background:#ffc0c0;box-shadow:inset 0 0 0 1px #000"></div><div style="left:752px;top:179px;width:29px;height:22px;background:#a09c9c;box-shadow:inset 0 0 0 1px #000"></div><svg style="left:751px;top:201px" width="14" height="12" shape-rendering="crispEdges"><path d="M4 3v5h6" fill="none" stroke="#000" stroke-width="1.6"/><path d="M4 0l-3.5 3.5h7zM14 8l-4-3.5v7z" fill="#000"/></svg><div style="left:748px;top:218px;width:48px;height:1px;background:#808080;"></div><div style="left:748px;top:218px;width:1px;height:81px;background:#808080;"></div><div style="left:748px;top:298px;width:48px;height:1px;background:#808080;"></div><div style="left:795px;top:218px;width:1px;height:81px;background:#808080;"></div><div style="left:749px;top:219px;width:47px;height:1px;background:#ffffff;"></div><div style="left:749px;top:219px;width:1px;height:80px;background:#ffffff;"></div><div style="left:748px;top:299px;width:49px;height:1px;background:#ffffff;"></div><div style="left:796px;top:218px;width:1px;height:82px;background:#ffffff;"></div><div class="t" style="left:756px;top:221px;font-size:11px;color:#000;font-weight:bold;font-family:Liberation Sans;letter-spacing:0.2px">R --</div><div class="t" style="left:756px;top:232px;font-size:11px;color:#000;font-weight:bold;font-family:Liberation Sans;letter-spacing:0.2px">G --</div><div class="t" style="left:756px;top:243px;font-size:11px;color:#000;font-weight:bold;font-family:Liberation Sans;letter-spacing:0.2px">B --</div><div style="left:754px;top:267px;width:36px;height:28px;background:#808080;"></div><div style="left:754px;top:267px;width:36px;height:1px;background:#808080;"></div><div style="left:754px;top:267px;width:1px;height:28px;background:#808080;"></div><div style="left:755px;top:268px;width:35px;height:1px;background:#ffffff;"></div><div style="left:755px;top:268px;width:1px;height:27px;background:#ffffff;"></div><div style="left:754px;top:294px;width:36px;height:1px;background:#ffffff;"></div><div style="left:789px;top:267px;width:1px;height:28px;background:#ffffff;"></div><svg style="left:756px;top:269px" width="33" height="25" shape-rendering="crispEdges"><path d="M0 0L33 25M33 0L0 25" stroke="#000" shape-rendering="auto"/></svg><div style="left:744px;top:552px;width:56px;height:1px;background:#808080;"></div><div class="t" style="left:3px;top:559px;font-size:10.3px;color:#000;font-weight:normal;">For Help, press F1</div><div style="left:730px;top:556px;width:70px;height:1px;background:#808080;"></div><div style="left:730px;top:556px;width:1px;height:16px;background:#808080;"></div><div style="left:730px;top:571px;width:70px;height:1px;background:#ffffff;"></div><div style="left:799px;top:556px;width:1px;height:16px;background:#ffffff;"></div><div class="t" style="left:732px;top:558px;font-size:10.5px;color:#000;font-weight:normal;">Image: None</div><div style="left:0;top:-1px;width:800px;height:601px"><div style="left:0px;top:573px;width:800px;height:1px;background:#c0c0c0;"></div><div style="left:0px;top:574px;width:800px;height:1px;background:#ffffff;"></div><div style="left:2px;top:577px;width:54px;height:22px;background:#c0c0c0;"></div><div style="left:2px;top:577px;width:54px;height:1px;background:#ffffff;"></div><div style="left:2px;top:577px;width:1px;height:22px;background:#ffffff;"></div><div style="left:2px;top:598px;width:54px;height:1px;background:#000000;"></div><div style="left:55px;top:577px;width:1px;height:22px;background:#000000;"></div><div style="left:3px;top:597px;width:52px;height:1px;background:#808080;"></div><div style="left:54px;top:578px;width:1px;height:20px;background:#808080;"></div><div style="left:2px;top:577px;width:54px;height:1px;background:#ffffff;"></div><svg style="left:4px;top:579px" width="18" height="18" viewBox="0 0 20 18" preserveAspectRatio="none"><path d="M7 3q4-3 12-1v13q-7-2-12 1z" fill="#000"/><path d="M8.5 4q2-1.5 4.5-1v5q-2.5-.5-4.5 1z" fill="#ff2020"/><path d="M14 3.2q2 0 3.5.3v5q-1.5-.3-3.5-.3z" fill="#20d020"/><path d="M8.5 10q2-1.5 4.5-1v5q-2.5-.5-4.5 1z" fill="#2040ff"/><path d="M14 9.2q2 0 3.5.3v5q-1.5-.3-3.5-.3z" fill="#ffff20"/><path d="M1 6h5M1 9h5M1 12h5" stroke="#e02020" stroke-width="1.2" stroke-dasharray="1.5 1"/><path d="M2 7.5h4M2 10.5h4" stroke="#2040e0" stroke-width="1" stroke-dasharray="1.5 1"/></svg><div class="t" style="left:25px;top:583px;font-size:11px;color:#000;font-weight:bold;">Start</div><div style="left:58px;top:577px;width:1px;height:22px;background:#808080;"></div><div style="left:59px;top:577px;width:1px;height:22px;background:#ffffff;"></div><div style="left:62px;top:579px;width:1px;height:18px;background:#ffffff;"></div><div style="left:63px;top:579px;width:1px;height:18px;background:#c0c0c0;"></div><div style="left:64px;top:579px;width:1px;height:18px;background:#808080;"></div><svg style="left:72px;top:580px" width="17" height="17" shape-rendering="crispEdges"><rect x="0.5" y="1.5" width="15" height="14" fill="#4080c0" stroke="#000"/><path d="M3 9l4 4 7-9" fill="none" stroke="#fff" stroke-width="2.5"/><path d="M3 9l4 4 7-9" fill="none" stroke="#000" stroke-width="0.8"/><rect x="11" y="1" width="5" height="3" fill="#e0a000"/></svg><svg style="left:96px;top:580px" width="17" height="17" shape-rendering="crispEdges"><circle cx="8.5" cy="8.5" r="7.5" fill="#ffe000" stroke="#000" stroke-width="0.8"/><circle cx="6" cy="6" r="1" fill="#000"/><circle cx="11" cy="6" r="1" fill="#000"/><path d="M4 10q4.5 4 9 0" fill="none" stroke="#000"/></svg><svg style="left:118px;top:582px" width="16" height="14" shape-rendering="crispEdges"><rect x="0.5" y="2.5" width="12" height="9" fill="#fff" stroke="#000"/><rect x="1" y="3" width="11" height="2" fill="#a0c0e0"/><path d="M13 12l2 1" stroke="#808080"/></svg><svg style="left:140px;top:580px" width="17" height="17" shape-rendering="crispEdges"><rect x="0" y="0" width="16" height="16" fill="#fff"/><rect x="0" y="0" width="16" height="2" fill="#c0c0ff"/><path d="M0 16v-7l4-3 4 5 4-6 4 4v7z" fill="#800080"/><rect x="0" y="14" width="16" height="2" fill="#40a0a0"/></svg><svg style="left:164px;top:580px" width="17" height="17" shape-rendering="crispEdges"><rect width="16" height="16" fill="#f0e080"/><circle cx="8" cy="8" r="7" fill="#203080"/><circle cx="6" cy="6" r="3" fill="#6080c0"/><circle cx="11" cy="10" r="3" fill="#101040"/><circle cx="9" cy="4" r="2" fill="#e0e0e0"/></svg><svg style="left:187px;top:580px" width="17" height="17" shape-rendering="crispEdges"><rect width="17" height="17" fill="#ffff40"/><circle cx="8.5" cy="8.5" r="7" fill="#000"/><circle cx="8.5" cy="8.5" r="4.5" fill="#fff"/><path d="M5 7h7M5 10h7M7 5v7M10 5v7" stroke="#000"/></svg><svg style="left:210px;top:580px" width="17" height="17" shape-rendering="crispEdges"><rect x="0.5" y="0.5" width="16" height="16" fill="#000080" stroke="#000"/><text x="3" y="14" font-family="Liberation Serif" font-weight="bold" font-size="14" fill="#fff">N</text></svg><svg style="left:231px;top:580px" width="18" height="18" shape-rendering="crispEdges"><ellipse cx="9" cy="4" rx="2" ry="3.5" fill="#e03020" stroke="#000" stroke-width="0.5" transform="rotate(0 9 9)"/><ellipse cx="9" cy="4" rx="2" ry="3.5" fill="#2050e0" stroke="#000" stroke-width="0.5" transform="rotate(45 9 9)"/><ellipse cx="9" cy="4" rx="2" ry="3.5" fill="#30b030" stroke="#000" stroke-width="0.5" transform="rotate(90 9 9)"/><ellipse cx="9" cy="4" rx="2" ry="3.5" fill="#e0c020" stroke="#000" stroke-width="0.5" transform="rotate(135 9 9)"/><ellipse cx="9" cy="4" rx="2" ry="3.5" fill="#e03020" stroke="#000" stroke-width="0.5" transform="rotate(180 9 9)"/><ellipse cx="9" cy="4" rx="2" ry="3.5" fill="#2050e0" stroke="#000" stroke-width="0.5" transform="rotate(225 9 9)"/><ellipse cx="9" cy="4" rx="2" ry="3.5" fill="#30b030" stroke="#000" stroke-width="0.5" transform="rotate(270 9 9)"/><ellipse cx="9" cy="4" rx="2" ry="3.5" fill="#e08020" stroke="#000" stroke-width="0.5" transform="rotate(315 9 9)"/><circle cx="9" cy="9" r="2.5" fill="#806020"/></svg><svg style="left:255px;top:580px" width="18" height="17" shape-rendering="crispEdges"><path d="M3.5 7.5l11-3 2 9-11 3z" fill="#fff" stroke="#000" stroke-width="0.8"/><path d="M1.5 5.5l12-4 2.5 6-12 4z" fill="#10d010" stroke="#000" stroke-width="0.8"/><path d="M4 5l8-2.6" stroke="#80ff80"/></svg><div style="left:285px;top:577px;width:1px;height:22px;background:#808080;"></div><div style="left:286px;top:577px;width:1px;height:22px;background:#ffffff;"></div><div style="left:289px;top:579px;width:1px;height:18px;background:#ffffff;"></div><div style="left:290px;top:579px;width:1px;height:18px;background:#c0c0c0;"></div><div style="left:291px;top:579px;width:1px;height:18px;background:#808080;"></div><div style="left:293px;top:577px;width:160px;height:22px;background:#c0c0c0;"></div><div style="left:293px;top:577px;width:160px;height:1px;background:#ffffff;"></div><div style="left:293px;top:577px;width:1px;height:22px;background:#ffffff;"></div><div style="left:293px;top:598px;width:160px;height:1px;background:#000000;"></div><div style="left:452px;top:577px;width:1px;height:22px;background:#000000;"></div><div style="left:294px;top:597px;width:158px;height:1px;background:#808080;"></div><div style="left:451px;top:578px;width:1px;height:20px;background:#808080;"></div><div style="left:293px;top:577px;width:159px;height:1px;background:#ffffff;"></div><svg style="left:298px;top:580px" width="17" height="17" shape-rendering="crispEdges"><path d="M0.5 3.5h5l1 1h8v10h-14z" fill="#f0e090" stroke="#000" stroke-width="0.8"/><circle cx="8" cy="9" r="3.5" fill="#c0e0ff" stroke="#000080" stroke-width="1.3"/><path d="M10.5 11.5l4 4" stroke="#000080" stroke-width="2"/></svg><div class="t" style="left:316px;top:583px;font-size:10.2px;color:#000;font-weight:normal;">Exploring - images</div><div style="left:455px;top:577px;width:160px;height:22px;background:repeating-conic-gradient(#fff 0 25%,#c0c0c0 0 50%) 0 0/2px 2px"></div><div style="left:455px;top:577px;width:160px;height:1px;background:#000000;"></div><div style="left:455px;top:577px;width:1px;height:22px;background:#000000;"></div><div style="left:456px;top:578px;width:158px;height:1px;background:#808080;"></div><div style="left:456px;top:578px;width:1px;height:20px;background:#808080;"></div><div style="left:455px;top:598px;width:160px;height:1px;background:#ffffff;"></div><div style="left:614px;top:577px;width:1px;height:22px;background:#ffffff;"></div><svg style="left:459px;top:580px" width="18" height="17" shape-rendering="crispEdges"><ellipse cx="9" cy="9.5" rx="7.5" ry="5.5" fill="#805030" stroke="#000" stroke-width="0.6"/><circle cx="6" cy="8" r="1.4" fill="#e03030"/><circle cx="10" cy="7" r="1.3" fill="#30a030"/><circle cx="12.5" cy="10.5" r="1.3" fill="#e0c040"/><circle cx="8" cy="12" r="1.3" fill="#fff"/><path d="M2 1l12 11" stroke="#000" stroke-width="1.5"/><text x="14" y="17" font-size="6" font-family="Liberation Sans">s</text></svg><div class="t" style="left:478px;top:583px;font-size:12px;color:#000;font-weight:bold;">Paint Shop Pro - Ima...</div><div style="left:649px;top:577px;width:148px;height:1px;background:#808080;"></div><div style="left:649px;top:577px;width:1px;height:22px;background:#808080;"></div><div style="left:649px;top:598px;width:148px;height:1px;background:#ffffff;"></div><div style="left:796px;top:577px;width:1px;height:22px;background:#ffffff;"></div><svg style="left:652px;top:580px" width="17" height="16" shape-rendering="crispEdges"><path d="M1 5h3l5-4v14l-5-4h-3z" fill="#ffff80" stroke="#000" stroke-width="0.8"/><path d="M11 5l3-2M11 8h4M11 11l3 2" stroke="#808080"/></svg><svg style="left:669px;top:581px" width="18" height="14" shape-rendering="crispEdges"><rect x="0.5" y="0.5" width="16" height="12" fill="#808080" stroke="#000"/><rect x="3" y="3" width="11" height="7" fill="#004000"/><rect x="5" y="5" width="7" height="3" fill="#40a040"/></svg><svg style="left:688px;top:579px" width="18" height="17" shape-rendering="crispEdges"><path d="M3.5 7.5l11-3 2 9-11 3z" fill="#fff" stroke="#000" stroke-width="0.8"/><path d="M1.5 5.5l12-4 2.5 6-12 4z" fill="#10d010" stroke="#000" stroke-width="0.8"/><path d="M4 5l8-2.6" stroke="#80ff80"/></svg><svg style="left:705px;top:579px" width="18" height="17" shape-rendering="crispEdges"><circle cx="9" cy="3" r="2.6" fill="#40c040" stroke="#000" stroke-width="0.6"/><circle cx="14.5" cy="6.5" r="2.6" fill="#40c040" stroke="#000" stroke-width="0.6"/><circle cx="13" cy="13" r="2.6" fill="#40c040" stroke="#000" stroke-width="0.6"/><circle cx="5" cy="13" r="2.6" fill="#40c040" stroke="#000" stroke-width="0.6"/><circle cx="3.5" cy="6.5" r="2.6" fill="#40c040" stroke="#000" stroke-width="0.6"/><circle cx="9" cy="9" r="3" fill="#000"/><circle cx="9" cy="9" r="1.2" fill="#fff"/></svg><svg style="left:723px;top:579px" width="17" height="17" shape-rendering="crispEdges"><ellipse cx="9" cy="3" rx="5" ry="2.5" fill="#e0e0a0" stroke="#808040" stroke-width="0.6"/><rect x="1.5" y="6.5" width="14" height="9" fill="#808080" stroke="#000"/><circle cx="8.5" cy="11" r="3" fill="#00c0ff"/></svg><div class="t" style="left:748px;top:583px;font-size:10.2px;color:#000;font-weight:normal;">2:22 PM</div></div></body></html>
